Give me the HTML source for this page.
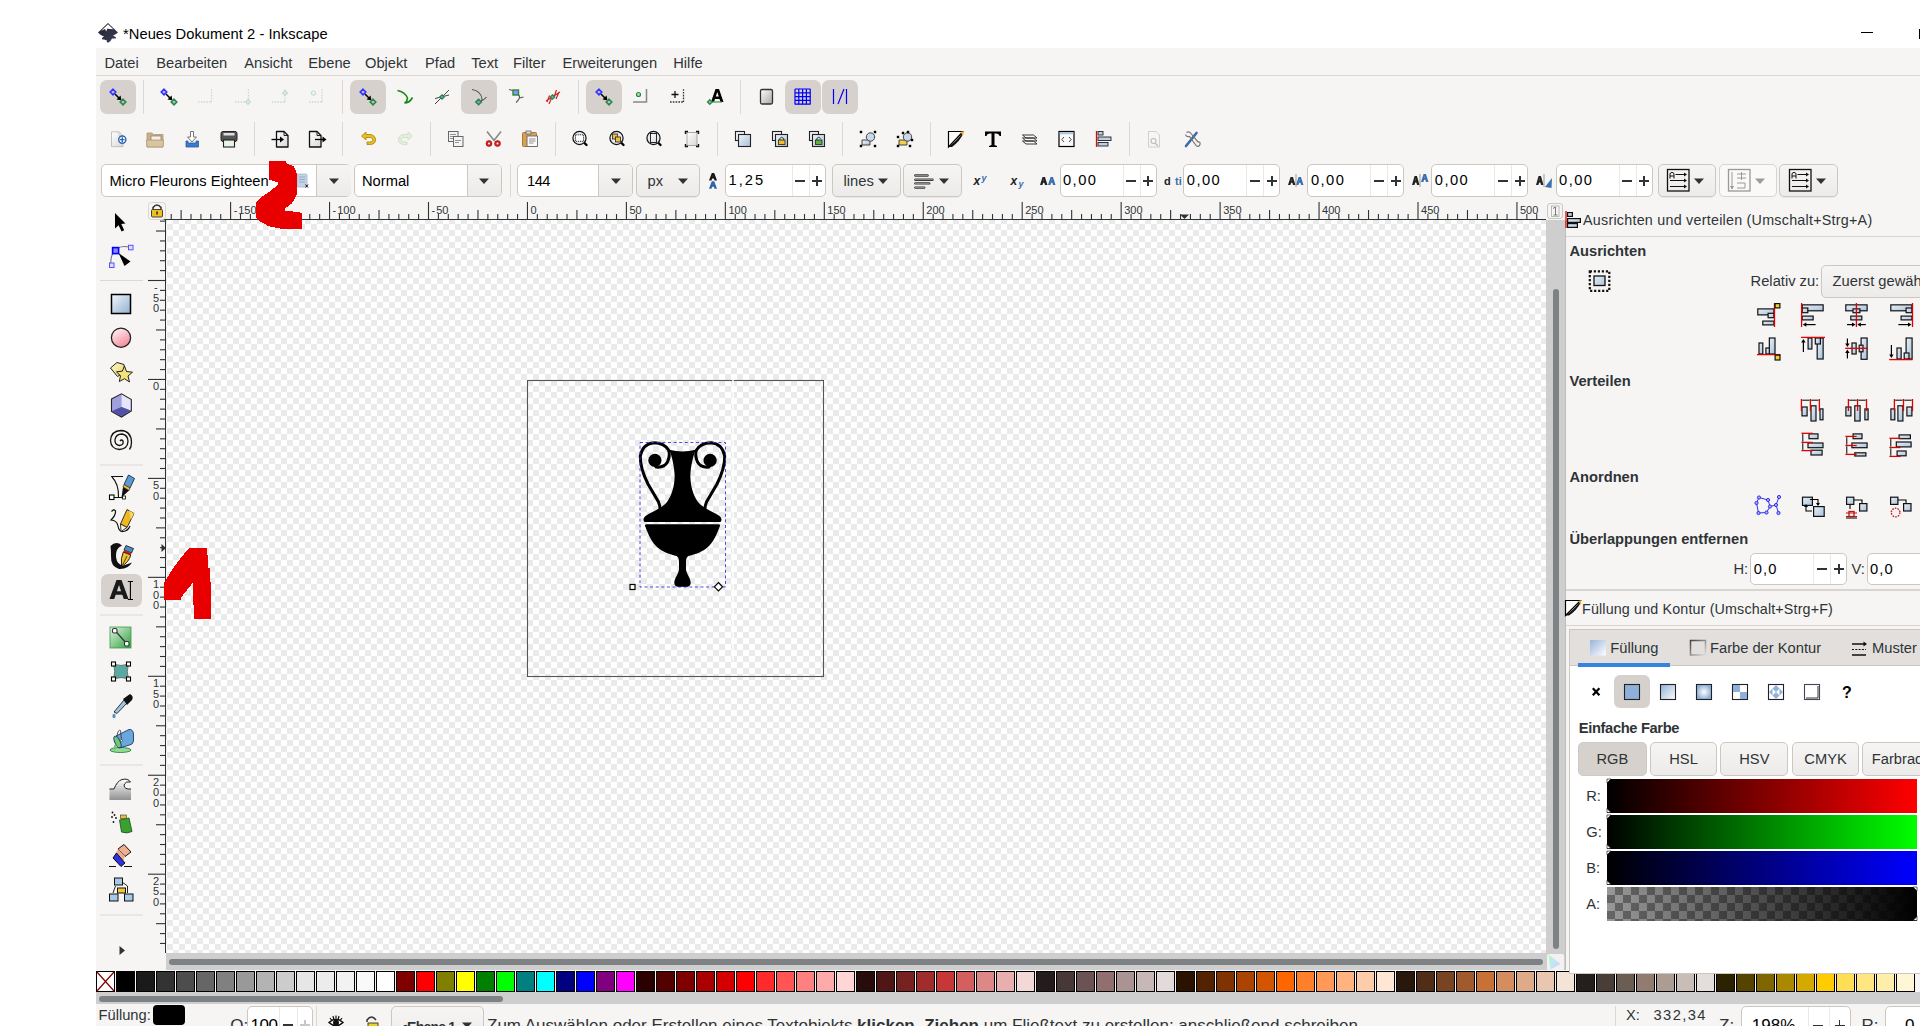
<!DOCTYPE html>
<html><head><meta charset="utf-8"><title>Inkscape</title>
<style>
html,body{margin:0;padding:0;}
body{width:1920px;height:1026px;position:relative;overflow:hidden;background:#fff;font-family:"Liberation Sans", sans-serif;}
div,svg{box-sizing:border-box;}
</style></head><body>
<div style="position:absolute;left:96px;top:48px;width:1824px;height:978px;background:#f6f5f4;"></div><div style="position:absolute;left:96px;top:75px;width:1824px;height:1px;background:#dcd9d5;"></div><div class="t" style="position:absolute;left:123px;top:26.76px;font-size:14.7px;line-height:14.7px;color:#000;font-weight:normal;white-space:nowrap;letter-spacing:0.05px;">*Neues Dokument 2 - Inkscape</div><svg style="position:absolute;left:94px;top:18px;" width="30" height="28" viewBox="0 0 30 28"><defs><linearGradient id="gInk" x1="0" y1="0" x2="1" y2="1"><stop offset="0" stop-color="#222"/><stop offset="1" stop-color="#3a4060"/></linearGradient></defs><path d="M14 5 L24 14.5 Q22 16.5 19 17.5 L21.5 19 Q23 20.5 20.5 20.5 L18 20.5 Q17 23 14.5 24.5 Q12 24.5 13 22.5 L10 21.5 Q7.5 21.5 8 20 L10 18.5 Q6 17 4 14.5 Z" fill="url(#gInk)"/><path d="M14 6.2 L7.2 12.8 L11 11 L12.2 13.5 L13.2 10.8 L19.3 11.3 Z" fill="#fff"/></svg><div style="position:absolute;left:1861px;top:32px;width:12px;height:1px;background:#000;"></div><div style="position:absolute;left:1919px;top:29px;width:1px;height:10px;background:#000;"></div><div class="t" style="position:absolute;left:104.5px;top:55.56px;font-size:14.7px;line-height:14.7px;color:#2e3436;font-weight:normal;white-space:nowrap;">Datei</div><div class="t" style="position:absolute;left:156.25px;top:55.56px;font-size:14.7px;line-height:14.7px;color:#2e3436;font-weight:normal;white-space:nowrap;">Bearbeiten</div><div class="t" style="position:absolute;left:244.25px;top:55.56px;font-size:14.7px;line-height:14.7px;color:#2e3436;font-weight:normal;white-space:nowrap;">Ansicht</div><div class="t" style="position:absolute;left:308.25px;top:55.56px;font-size:14.7px;line-height:14.7px;color:#2e3436;font-weight:normal;white-space:nowrap;">Ebene</div><div class="t" style="position:absolute;left:365px;top:55.56px;font-size:14.7px;line-height:14.7px;color:#2e3436;font-weight:normal;white-space:nowrap;">Objekt</div><div class="t" style="position:absolute;left:425px;top:55.56px;font-size:14.7px;line-height:14.7px;color:#2e3436;font-weight:normal;white-space:nowrap;">Pfad</div><div class="t" style="position:absolute;left:471.25px;top:55.56px;font-size:14.7px;line-height:14.7px;color:#2e3436;font-weight:normal;white-space:nowrap;">Text</div><div class="t" style="position:absolute;left:513px;top:55.56px;font-size:14.7px;line-height:14.7px;color:#2e3436;font-weight:normal;white-space:nowrap;">Filter</div><div class="t" style="position:absolute;left:562.5px;top:55.56px;font-size:14.7px;line-height:14.7px;color:#2e3436;font-weight:normal;white-space:nowrap;">Erweiterungen</div><div class="t" style="position:absolute;left:673.25px;top:55.56px;font-size:14.7px;line-height:14.7px;color:#2e3436;font-weight:normal;white-space:nowrap;">Hilfe</div><div style="position:absolute;left:166px;top:220px;width:1380px;height:733px;background-color:#fff;background-image:conic-gradient(#fff 25%, #eaeaea 0 50%, #fff 0 75%, #eaeaea 0);background-size:12px 12px;background-position:1px 4px;"></div><div style="position:absolute;left:100px;top:80px;width:36px;height:34px;background:#d6d1cd;border-radius:7px;"></div><div style="position:absolute;left:143px;top:80px;width:1px;height:34px;background:#dcd9d5;"></div><div style="position:absolute;left:342px;top:80px;width:1px;height:34px;background:#dcd9d5;"></div><div style="position:absolute;left:350px;top:80px;width:36px;height:34px;background:#d6d1cd;border-radius:7px;"></div><div style="position:absolute;left:461px;top:80px;width:36px;height:34px;background:#d6d1cd;border-radius:7px;"></div><div style="position:absolute;left:578px;top:80px;width:1px;height:34px;background:#dcd9d5;"></div><div style="position:absolute;left:586px;top:80px;width:36px;height:34px;background:#d6d1cd;border-radius:7px;"></div><div style="position:absolute;left:740px;top:80px;width:1px;height:34px;background:#dcd9d5;"></div><div style="position:absolute;left:785px;top:80px;width:36px;height:34px;background:#d6d1cd;border-radius:7px;"></div><div style="position:absolute;left:822px;top:80px;width:36px;height:34px;background:#d6d1cd;border-radius:7px;"></div><div style="position:absolute;left:254px;top:122px;width:1px;height:34px;background:#dcd9d5;"></div><div style="position:absolute;left:430px;top:122px;width:1px;height:34px;background:#dcd9d5;"></div><div style="position:absolute;left:555px;top:122px;width:1px;height:34px;background:#dcd9d5;"></div><div style="position:absolute;left:717px;top:122px;width:1px;height:34px;background:#dcd9d5;"></div><div style="position:absolute;left:842px;top:122px;width:1px;height:34px;background:#dcd9d5;"></div><div style="position:absolute;left:930px;top:122px;width:1px;height:34px;background:#dcd9d5;"></div><div style="position:absolute;left:1129px;top:122px;width:1px;height:34px;background:#dcd9d5;"></div><div style="position:absolute;left:101px;top:164px;width:250px;height:33px;background:#fff;border:1px solid #cdc7c2;border-radius:5px;"></div><div style="position:absolute;left:316px;top:165px;width:35px;height:31px;background:linear-gradient(#f6f5f4,#edebe9);border-left:1px solid #cdc7c2;border-radius:0 4px 4px 0;"></div><svg style="position:absolute;left:329px;top:178px;" width="10" height="6" viewBox="0 0 10 6"><path d="M0 0.5H10L5 6Z" fill="#2e3436"/></svg><div class="t" style="position:absolute;left:109.5px;top:174.06px;font-size:14.7px;line-height:14.7px;color:#000;font-weight:normal;white-space:nowrap;">Micro Fleurons Eighteen</div><svg style="position:absolute;left:290px;top:170px;" width="24" height="24" viewBox="0 0 24 24"><rect x="7" y="4" width="10" height="13" rx="1" fill="#c4d4e8" stroke="#a8b8cc" stroke-width="0.8"/><path d="M9 7 L15 7 M9 9.5 L15 9.5 M9 12 L15 12" stroke="#8aa0c0" stroke-width="0.8"/><path d="M15.5 14.5 L18 17.5 M18 14.5 L15.5 17.5" stroke="#111" stroke-width="1"/></svg><div style="position:absolute;left:353.5px;top:164px;width:148px;height:33px;background:#fff;border:1px solid #cdc7c2;border-radius:5px;"></div><div style="position:absolute;left:466.5px;top:165px;width:34px;height:31px;background:linear-gradient(#f6f5f4,#edebe9);border-left:1px solid #cdc7c2;border-radius:0 4px 4px 0;"></div><svg style="position:absolute;left:479px;top:178px;" width="10" height="6" viewBox="0 0 10 6"><path d="M0 0.5H10L5 6Z" fill="#2e3436"/></svg><div class="t" style="position:absolute;left:362px;top:174.06px;font-size:14.7px;line-height:14.7px;color:#000;font-weight:normal;white-space:nowrap;">Normal</div><div style="position:absolute;left:510px;top:164px;width:1px;height:33px;background:#dcd9d5;"></div><div style="position:absolute;left:517px;top:164px;width:116px;height:33px;background:#fff;border:1px solid #cdc7c2;border-radius:5px;"></div><div style="position:absolute;left:598px;top:165px;width:34px;height:31px;background:linear-gradient(#f6f5f4,#edebe9);border-left:1px solid #cdc7c2;border-radius:0 4px 4px 0;"></div><svg style="position:absolute;left:611px;top:178px;" width="10" height="6" viewBox="0 0 10 6"><path d="M0 0.5H10L5 6Z" fill="#2e3436"/></svg><div class="t" style="position:absolute;left:527px;top:173.56px;font-size:14.7px;line-height:14.7px;color:#000;font-weight:normal;white-space:nowrap;letter-spacing:-0.5px;">144</div><div style="position:absolute;left:636px;top:164px;width:64px;height:33px;background:linear-gradient(#f6f5f4,#edebe9);border:1px solid #cdc7c2;border-radius:5px;box-shadow:0 1px #0000000d;"></div><div class="t" style="position:absolute;left:647.5px;top:174.06px;font-size:14.7px;line-height:14.7px;color:#2e3436;font-weight:normal;white-space:nowrap;">px</div><svg style="position:absolute;left:678px;top:178px;" width="10" height="6" viewBox="0 0 10 6"><path d="M0 0.5H10L5 6Z" fill="#2e3436"/></svg><div style="position:absolute;left:725px;top:164px;width:101px;height:33px;background:#fff;border:1px solid #cdc7c2;border-radius:5px;"></div><div style="position:absolute;left:792px;top:165px;width:1px;height:31px;background:#ebe8e6;"></div><div style="position:absolute;left:809px;top:165px;width:1px;height:31px;background:#ebe8e6;"></div><div style="position:absolute;left:795px;top:180px;width:10px;height:2px;background:#2e3436;"></div><div style="position:absolute;left:812px;top:180px;width:10px;height:2px;background:#2e3436;"></div><div style="position:absolute;left:816px;top:176px;width:2px;height:10px;background:#2e3436;"></div><div class="t" style="position:absolute;left:728.5px;top:173.06px;font-size:14.7px;line-height:14.7px;color:#000;font-weight:normal;white-space:nowrap;letter-spacing:2px;">1,25</div><div style="position:absolute;left:831.5px;top:164px;width:69px;height:33px;background:linear-gradient(#f6f5f4,#edebe9);border:1px solid #cdc7c2;border-radius:5px;box-shadow:0 1px #0000000d;"></div><div class="t" style="position:absolute;left:843.6px;top:174.06px;font-size:14.7px;line-height:14.7px;color:#2e3436;font-weight:normal;white-space:nowrap;">lines</div><svg style="position:absolute;left:878px;top:178px;" width="10" height="6" viewBox="0 0 10 6"><path d="M0 0.5H10L5 6Z" fill="#2e3436"/></svg><div style="position:absolute;left:902.5px;top:164px;width:59px;height:33px;background:linear-gradient(#f6f5f4,#edebe9);border:1px solid #cdc7c2;border-radius:5px;box-shadow:0 1px #0000000d;"></div><svg style="position:absolute;left:939px;top:178px;" width="10" height="6" viewBox="0 0 10 6"><path d="M0 0.5H10L5 6Z" fill="#2e3436"/></svg><div style="position:absolute;left:1059.5px;top:164px;width:97px;height:33px;background:#fff;border:1px solid #cdc7c2;border-radius:5px;"></div><div style="position:absolute;left:1122.5px;top:165px;width:1px;height:31px;background:#ebe8e6;"></div><div style="position:absolute;left:1139.5px;top:165px;width:1px;height:31px;background:#ebe8e6;"></div><div style="position:absolute;left:1126px;top:180px;width:10px;height:2px;background:#2e3436;"></div><div style="position:absolute;left:1143px;top:180px;width:10px;height:2px;background:#2e3436;"></div><div style="position:absolute;left:1147px;top:176px;width:2px;height:10px;background:#2e3436;"></div><div class="t" style="position:absolute;left:1063.0px;top:173.06px;font-size:14.7px;line-height:14.7px;color:#000;font-weight:normal;white-space:nowrap;letter-spacing:1.45px;">0,00</div><div style="position:absolute;left:1183.3px;top:164px;width:97px;height:33px;background:#fff;border:1px solid #cdc7c2;border-radius:5px;"></div><div style="position:absolute;left:1246.3px;top:165px;width:1px;height:31px;background:#ebe8e6;"></div><div style="position:absolute;left:1263.3px;top:165px;width:1px;height:31px;background:#ebe8e6;"></div><div style="position:absolute;left:1250px;top:180px;width:10px;height:2px;background:#2e3436;"></div><div style="position:absolute;left:1267px;top:180px;width:10px;height:2px;background:#2e3436;"></div><div style="position:absolute;left:1271px;top:176px;width:2px;height:10px;background:#2e3436;"></div><div class="t" style="position:absolute;left:1186.8px;top:173.06px;font-size:14.7px;line-height:14.7px;color:#000;font-weight:normal;white-space:nowrap;letter-spacing:1.45px;">0,00</div><div style="position:absolute;left:1307.4px;top:164px;width:97px;height:33px;background:#fff;border:1px solid #cdc7c2;border-radius:5px;"></div><div style="position:absolute;left:1370.4px;top:165px;width:1px;height:31px;background:#ebe8e6;"></div><div style="position:absolute;left:1387.4px;top:165px;width:1px;height:31px;background:#ebe8e6;"></div><div style="position:absolute;left:1374px;top:180px;width:10px;height:2px;background:#2e3436;"></div><div style="position:absolute;left:1391px;top:180px;width:10px;height:2px;background:#2e3436;"></div><div style="position:absolute;left:1395px;top:176px;width:2px;height:10px;background:#2e3436;"></div><div class="t" style="position:absolute;left:1310.9px;top:173.06px;font-size:14.7px;line-height:14.7px;color:#000;font-weight:normal;white-space:nowrap;letter-spacing:1.45px;">0,00</div><div style="position:absolute;left:1431.3px;top:164px;width:97px;height:33px;background:#fff;border:1px solid #cdc7c2;border-radius:5px;"></div><div style="position:absolute;left:1494.3px;top:165px;width:1px;height:31px;background:#ebe8e6;"></div><div style="position:absolute;left:1511.3px;top:165px;width:1px;height:31px;background:#ebe8e6;"></div><div style="position:absolute;left:1498px;top:180px;width:10px;height:2px;background:#2e3436;"></div><div style="position:absolute;left:1515px;top:180px;width:10px;height:2px;background:#2e3436;"></div><div style="position:absolute;left:1519px;top:176px;width:2px;height:10px;background:#2e3436;"></div><div class="t" style="position:absolute;left:1434.8px;top:173.06px;font-size:14.7px;line-height:14.7px;color:#000;font-weight:normal;white-space:nowrap;letter-spacing:1.45px;">0,00</div><div style="position:absolute;left:1555.6px;top:164px;width:97px;height:33px;background:#fff;border:1px solid #cdc7c2;border-radius:5px;"></div><div style="position:absolute;left:1618.6px;top:165px;width:1px;height:31px;background:#ebe8e6;"></div><div style="position:absolute;left:1635.6px;top:165px;width:1px;height:31px;background:#ebe8e6;"></div><div style="position:absolute;left:1622px;top:180px;width:10px;height:2px;background:#2e3436;"></div><div style="position:absolute;left:1639px;top:180px;width:10px;height:2px;background:#2e3436;"></div><div style="position:absolute;left:1643px;top:176px;width:2px;height:10px;background:#2e3436;"></div><div class="t" style="position:absolute;left:1559.1px;top:173.06px;font-size:14.7px;line-height:14.7px;color:#000;font-weight:normal;white-space:nowrap;letter-spacing:1.45px;">0,00</div><div style="position:absolute;left:1657.5px;top:164px;width:58.5px;height:33px;background:linear-gradient(#f6f5f4,#edebe9);border:1px solid #cdc7c2;border-radius:5px;box-shadow:0 1px #0000000d;"></div><svg style="position:absolute;left:1694px;top:178px;" width="10" height="6" viewBox="0 0 10 6"><path d="M0 0.5H10L5 6Z" fill="#2e3436"/></svg><div style="position:absolute;left:1718.7px;top:164px;width:58.5px;height:33px;background:#faf9f8;border:1px solid #d8d4d0;border-radius:5px;"></div><svg style="position:absolute;left:1755px;top:178px;" width="10" height="6" viewBox="0 0 10 6"><path d="M0 0.5H10L5 6Z" fill="#9a9a9a"/></svg><div style="position:absolute;left:1779.2px;top:164px;width:59.3px;height:33px;background:linear-gradient(#f6f5f4,#edebe9);border:1px solid #cdc7c2;border-radius:5px;box-shadow:0 1px #0000000d;"></div><svg style="position:absolute;left:1816px;top:178px;" width="10" height="6" viewBox="0 0 10 6"><path d="M0 0.5H10L5 6Z" fill="#2e3436"/></svg><div style="position:absolute;left:160px;top:219px;width:1386px;height:1.2px;background:#2e3436;"></div><div style="position:absolute;left:165px;top:219px;width:1.2px;height:734px;background:#2e3436;"></div><svg style="position:absolute;left:0px;top:0px;pointer-events:none;" width="1920" height="1026" viewBox="0 0 1920 1026"><rect x="170.68" y="214" width="1.1" height="6" fill="#2e3436"/><rect x="180.58" y="210" width="1.1" height="10" fill="#2e3436"/><rect x="190.47" y="214" width="1.1" height="6" fill="#2e3436"/><rect x="200.36" y="214" width="1.1" height="6" fill="#2e3436"/><rect x="210.26" y="214" width="1.1" height="6" fill="#2e3436"/><rect x="220.16" y="214" width="1.1" height="6" fill="#2e3436"/><rect x="230.05" y="202" width="1.1" height="18" fill="#2e3436"/><rect x="239.94" y="214" width="1.1" height="6" fill="#2e3436"/><rect x="249.84" y="214" width="1.1" height="6" fill="#2e3436"/><rect x="259.73" y="214" width="1.1" height="6" fill="#2e3436"/><rect x="269.63" y="214" width="1.1" height="6" fill="#2e3436"/><rect x="279.52" y="210" width="1.1" height="10" fill="#2e3436"/><rect x="289.42" y="214" width="1.1" height="6" fill="#2e3436"/><rect x="299.31" y="214" width="1.1" height="6" fill="#2e3436"/><rect x="309.21" y="214" width="1.1" height="6" fill="#2e3436"/><rect x="319.10" y="214" width="1.1" height="6" fill="#2e3436"/><rect x="329.00" y="202" width="1.1" height="18" fill="#2e3436"/><rect x="338.89" y="214" width="1.1" height="6" fill="#2e3436"/><rect x="348.79" y="214" width="1.1" height="6" fill="#2e3436"/><rect x="358.68" y="214" width="1.1" height="6" fill="#2e3436"/><rect x="368.58" y="214" width="1.1" height="6" fill="#2e3436"/><rect x="378.47" y="210" width="1.1" height="10" fill="#2e3436"/><rect x="388.37" y="214" width="1.1" height="6" fill="#2e3436"/><rect x="398.26" y="214" width="1.1" height="6" fill="#2e3436"/><rect x="408.16" y="214" width="1.1" height="6" fill="#2e3436"/><rect x="418.05" y="214" width="1.1" height="6" fill="#2e3436"/><rect x="427.95" y="202" width="1.1" height="18" fill="#2e3436"/><rect x="437.84" y="214" width="1.1" height="6" fill="#2e3436"/><rect x="447.74" y="214" width="1.1" height="6" fill="#2e3436"/><rect x="457.63" y="214" width="1.1" height="6" fill="#2e3436"/><rect x="467.53" y="214" width="1.1" height="6" fill="#2e3436"/><rect x="477.42" y="210" width="1.1" height="10" fill="#2e3436"/><rect x="487.32" y="214" width="1.1" height="6" fill="#2e3436"/><rect x="497.21" y="214" width="1.1" height="6" fill="#2e3436"/><rect x="507.11" y="214" width="1.1" height="6" fill="#2e3436"/><rect x="517.00" y="214" width="1.1" height="6" fill="#2e3436"/><rect x="526.90" y="202" width="1.1" height="18" fill="#2e3436"/><rect x="536.79" y="214" width="1.1" height="6" fill="#2e3436"/><rect x="546.69" y="214" width="1.1" height="6" fill="#2e3436"/><rect x="556.58" y="214" width="1.1" height="6" fill="#2e3436"/><rect x="566.48" y="214" width="1.1" height="6" fill="#2e3436"/><rect x="576.38" y="210" width="1.1" height="10" fill="#2e3436"/><rect x="586.27" y="214" width="1.1" height="6" fill="#2e3436"/><rect x="596.16" y="214" width="1.1" height="6" fill="#2e3436"/><rect x="606.06" y="214" width="1.1" height="6" fill="#2e3436"/><rect x="615.96" y="214" width="1.1" height="6" fill="#2e3436"/><rect x="625.85" y="202" width="1.1" height="18" fill="#2e3436"/><rect x="635.75" y="214" width="1.1" height="6" fill="#2e3436"/><rect x="645.64" y="214" width="1.1" height="6" fill="#2e3436"/><rect x="655.53" y="214" width="1.1" height="6" fill="#2e3436"/><rect x="665.43" y="214" width="1.1" height="6" fill="#2e3436"/><rect x="675.32" y="210" width="1.1" height="10" fill="#2e3436"/><rect x="685.22" y="214" width="1.1" height="6" fill="#2e3436"/><rect x="695.12" y="214" width="1.1" height="6" fill="#2e3436"/><rect x="705.01" y="214" width="1.1" height="6" fill="#2e3436"/><rect x="714.90" y="214" width="1.1" height="6" fill="#2e3436"/><rect x="724.80" y="202" width="1.1" height="18" fill="#2e3436"/><rect x="734.70" y="214" width="1.1" height="6" fill="#2e3436"/><rect x="744.59" y="214" width="1.1" height="6" fill="#2e3436"/><rect x="754.49" y="214" width="1.1" height="6" fill="#2e3436"/><rect x="764.38" y="214" width="1.1" height="6" fill="#2e3436"/><rect x="774.27" y="210" width="1.1" height="10" fill="#2e3436"/><rect x="784.17" y="214" width="1.1" height="6" fill="#2e3436"/><rect x="794.06" y="214" width="1.1" height="6" fill="#2e3436"/><rect x="803.96" y="214" width="1.1" height="6" fill="#2e3436"/><rect x="813.86" y="214" width="1.1" height="6" fill="#2e3436"/><rect x="823.75" y="202" width="1.1" height="18" fill="#2e3436"/><rect x="833.64" y="214" width="1.1" height="6" fill="#2e3436"/><rect x="843.54" y="214" width="1.1" height="6" fill="#2e3436"/><rect x="853.44" y="214" width="1.1" height="6" fill="#2e3436"/><rect x="863.33" y="214" width="1.1" height="6" fill="#2e3436"/><rect x="873.23" y="210" width="1.1" height="10" fill="#2e3436"/><rect x="883.12" y="214" width="1.1" height="6" fill="#2e3436"/><rect x="893.01" y="214" width="1.1" height="6" fill="#2e3436"/><rect x="902.91" y="214" width="1.1" height="6" fill="#2e3436"/><rect x="912.80" y="214" width="1.1" height="6" fill="#2e3436"/><rect x="922.70" y="202" width="1.1" height="18" fill="#2e3436"/><rect x="932.59" y="214" width="1.1" height="6" fill="#2e3436"/><rect x="942.49" y="214" width="1.1" height="6" fill="#2e3436"/><rect x="952.38" y="214" width="1.1" height="6" fill="#2e3436"/><rect x="962.28" y="214" width="1.1" height="6" fill="#2e3436"/><rect x="972.18" y="210" width="1.1" height="10" fill="#2e3436"/><rect x="982.07" y="214" width="1.1" height="6" fill="#2e3436"/><rect x="991.97" y="214" width="1.1" height="6" fill="#2e3436"/><rect x="1001.86" y="214" width="1.1" height="6" fill="#2e3436"/><rect x="1011.75" y="214" width="1.1" height="6" fill="#2e3436"/><rect x="1021.65" y="202" width="1.1" height="18" fill="#2e3436"/><rect x="1031.55" y="214" width="1.1" height="6" fill="#2e3436"/><rect x="1041.44" y="214" width="1.1" height="6" fill="#2e3436"/><rect x="1051.34" y="214" width="1.1" height="6" fill="#2e3436"/><rect x="1061.23" y="214" width="1.1" height="6" fill="#2e3436"/><rect x="1071.12" y="210" width="1.1" height="10" fill="#2e3436"/><rect x="1081.02" y="214" width="1.1" height="6" fill="#2e3436"/><rect x="1090.91" y="214" width="1.1" height="6" fill="#2e3436"/><rect x="1100.81" y="214" width="1.1" height="6" fill="#2e3436"/><rect x="1110.71" y="214" width="1.1" height="6" fill="#2e3436"/><rect x="1120.60" y="202" width="1.1" height="18" fill="#2e3436"/><rect x="1130.50" y="214" width="1.1" height="6" fill="#2e3436"/><rect x="1140.39" y="214" width="1.1" height="6" fill="#2e3436"/><rect x="1150.29" y="214" width="1.1" height="6" fill="#2e3436"/><rect x="1160.18" y="214" width="1.1" height="6" fill="#2e3436"/><rect x="1170.08" y="210" width="1.1" height="10" fill="#2e3436"/><rect x="1179.97" y="214" width="1.1" height="6" fill="#2e3436"/><rect x="1189.87" y="214" width="1.1" height="6" fill="#2e3436"/><rect x="1199.76" y="214" width="1.1" height="6" fill="#2e3436"/><rect x="1209.66" y="214" width="1.1" height="6" fill="#2e3436"/><rect x="1219.55" y="202" width="1.1" height="18" fill="#2e3436"/><rect x="1229.45" y="214" width="1.1" height="6" fill="#2e3436"/><rect x="1239.34" y="214" width="1.1" height="6" fill="#2e3436"/><rect x="1249.24" y="214" width="1.1" height="6" fill="#2e3436"/><rect x="1259.13" y="214" width="1.1" height="6" fill="#2e3436"/><rect x="1269.03" y="210" width="1.1" height="10" fill="#2e3436"/><rect x="1278.92" y="214" width="1.1" height="6" fill="#2e3436"/><rect x="1288.82" y="214" width="1.1" height="6" fill="#2e3436"/><rect x="1298.71" y="214" width="1.1" height="6" fill="#2e3436"/><rect x="1308.61" y="214" width="1.1" height="6" fill="#2e3436"/><rect x="1318.50" y="202" width="1.1" height="18" fill="#2e3436"/><rect x="1328.39" y="214" width="1.1" height="6" fill="#2e3436"/><rect x="1338.29" y="214" width="1.1" height="6" fill="#2e3436"/><rect x="1348.19" y="214" width="1.1" height="6" fill="#2e3436"/><rect x="1358.08" y="214" width="1.1" height="6" fill="#2e3436"/><rect x="1367.98" y="210" width="1.1" height="10" fill="#2e3436"/><rect x="1377.87" y="214" width="1.1" height="6" fill="#2e3436"/><rect x="1387.77" y="214" width="1.1" height="6" fill="#2e3436"/><rect x="1397.66" y="214" width="1.1" height="6" fill="#2e3436"/><rect x="1407.56" y="214" width="1.1" height="6" fill="#2e3436"/><rect x="1417.45" y="202" width="1.1" height="18" fill="#2e3436"/><rect x="1427.35" y="214" width="1.1" height="6" fill="#2e3436"/><rect x="1437.24" y="214" width="1.1" height="6" fill="#2e3436"/><rect x="1447.14" y="214" width="1.1" height="6" fill="#2e3436"/><rect x="1457.03" y="214" width="1.1" height="6" fill="#2e3436"/><rect x="1466.93" y="210" width="1.1" height="10" fill="#2e3436"/><rect x="1476.82" y="214" width="1.1" height="6" fill="#2e3436"/><rect x="1486.72" y="214" width="1.1" height="6" fill="#2e3436"/><rect x="1496.61" y="214" width="1.1" height="6" fill="#2e3436"/><rect x="1506.51" y="214" width="1.1" height="6" fill="#2e3436"/><rect x="1516.40" y="202" width="1.1" height="18" fill="#2e3436"/><rect x="1526.30" y="214" width="1.1" height="6" fill="#2e3436"/><rect x="1536.19" y="214" width="1.1" height="6" fill="#2e3436"/></svg><div class="t" style="position:absolute;left:233.64999999999998px;top:204.69px;font-size:11px;line-height:11px;color:#2e3436;font-weight:normal;white-space:nowrap;">-&#8202;150</div><div class="t" style="position:absolute;left:332.6px;top:204.69px;font-size:11px;line-height:11px;color:#2e3436;font-weight:normal;white-space:nowrap;">-&#8202;100</div><div class="t" style="position:absolute;left:431.55px;top:204.69px;font-size:11px;line-height:11px;color:#2e3436;font-weight:normal;white-space:nowrap;">-&#8202;50</div><div class="t" style="position:absolute;left:530.5px;top:204.69px;font-size:11px;line-height:11px;color:#2e3436;font-weight:normal;white-space:nowrap;">0</div><div class="t" style="position:absolute;left:629.45px;top:204.69px;font-size:11px;line-height:11px;color:#2e3436;font-weight:normal;white-space:nowrap;">50</div><div class="t" style="position:absolute;left:728.4px;top:204.69px;font-size:11px;line-height:11px;color:#2e3436;font-weight:normal;white-space:nowrap;">100</div><div class="t" style="position:absolute;left:827.35px;top:204.69px;font-size:11px;line-height:11px;color:#2e3436;font-weight:normal;white-space:nowrap;">150</div><div class="t" style="position:absolute;left:926.3px;top:204.69px;font-size:11px;line-height:11px;color:#2e3436;font-weight:normal;white-space:nowrap;">200</div><div class="t" style="position:absolute;left:1025.25px;top:204.69px;font-size:11px;line-height:11px;color:#2e3436;font-weight:normal;white-space:nowrap;">250</div><div class="t" style="position:absolute;left:1124.2px;top:204.69px;font-size:11px;line-height:11px;color:#2e3436;font-weight:normal;white-space:nowrap;">300</div><div class="t" style="position:absolute;left:1223.15px;top:204.69px;font-size:11px;line-height:11px;color:#2e3436;font-weight:normal;white-space:nowrap;">350</div><div class="t" style="position:absolute;left:1322.1px;top:204.69px;font-size:11px;line-height:11px;color:#2e3436;font-weight:normal;white-space:nowrap;">400</div><div class="t" style="position:absolute;left:1421.0500000000002px;top:204.69px;font-size:11px;line-height:11px;color:#2e3436;font-weight:normal;white-space:nowrap;">450</div><div class="t" style="position:absolute;left:1520.0px;top:204.69px;font-size:11px;line-height:11px;color:#2e3436;font-weight:normal;white-space:nowrap;">500</div><svg style="position:absolute;left:0px;top:0px;pointer-events:none;" width="1920" height="1026" viewBox="0 0 1920 1026"><rect x="160" y="220.58" width="6" height="1.1" fill="#2e3436"/><rect x="156" y="230.47" width="10" height="1.1" fill="#2e3436"/><rect x="160" y="240.37" width="6" height="1.1" fill="#2e3436"/><rect x="160" y="250.26" width="6" height="1.1" fill="#2e3436"/><rect x="160" y="260.16" width="6" height="1.1" fill="#2e3436"/><rect x="160" y="270.05" width="6" height="1.1" fill="#2e3436"/><rect x="148" y="279.95" width="18" height="1.1" fill="#2e3436"/><rect x="160" y="289.84" width="6" height="1.1" fill="#2e3436"/><rect x="160" y="299.74" width="6" height="1.1" fill="#2e3436"/><rect x="160" y="309.63" width="6" height="1.1" fill="#2e3436"/><rect x="160" y="319.53" width="6" height="1.1" fill="#2e3436"/><rect x="156" y="329.42" width="10" height="1.1" fill="#2e3436"/><rect x="160" y="339.32" width="6" height="1.1" fill="#2e3436"/><rect x="160" y="349.21" width="6" height="1.1" fill="#2e3436"/><rect x="160" y="359.11" width="6" height="1.1" fill="#2e3436"/><rect x="160" y="369.00" width="6" height="1.1" fill="#2e3436"/><rect x="148" y="378.90" width="18" height="1.1" fill="#2e3436"/><rect x="160" y="388.79" width="6" height="1.1" fill="#2e3436"/><rect x="160" y="398.69" width="6" height="1.1" fill="#2e3436"/><rect x="160" y="408.58" width="6" height="1.1" fill="#2e3436"/><rect x="160" y="418.48" width="6" height="1.1" fill="#2e3436"/><rect x="156" y="428.38" width="10" height="1.1" fill="#2e3436"/><rect x="160" y="438.27" width="6" height="1.1" fill="#2e3436"/><rect x="160" y="448.16" width="6" height="1.1" fill="#2e3436"/><rect x="160" y="458.06" width="6" height="1.1" fill="#2e3436"/><rect x="160" y="467.95" width="6" height="1.1" fill="#2e3436"/><rect x="148" y="477.85" width="18" height="1.1" fill="#2e3436"/><rect x="160" y="487.75" width="6" height="1.1" fill="#2e3436"/><rect x="160" y="497.64" width="6" height="1.1" fill="#2e3436"/><rect x="160" y="507.53" width="6" height="1.1" fill="#2e3436"/><rect x="160" y="517.43" width="6" height="1.1" fill="#2e3436"/><rect x="156" y="527.32" width="10" height="1.1" fill="#2e3436"/><rect x="160" y="537.22" width="6" height="1.1" fill="#2e3436"/><rect x="160" y="547.12" width="6" height="1.1" fill="#2e3436"/><rect x="160" y="557.01" width="6" height="1.1" fill="#2e3436"/><rect x="160" y="566.90" width="6" height="1.1" fill="#2e3436"/><rect x="148" y="576.80" width="18" height="1.1" fill="#2e3436"/><rect x="160" y="586.70" width="6" height="1.1" fill="#2e3436"/><rect x="160" y="596.59" width="6" height="1.1" fill="#2e3436"/><rect x="160" y="606.49" width="6" height="1.1" fill="#2e3436"/><rect x="160" y="616.38" width="6" height="1.1" fill="#2e3436"/><rect x="156" y="626.27" width="10" height="1.1" fill="#2e3436"/><rect x="160" y="636.17" width="6" height="1.1" fill="#2e3436"/><rect x="160" y="646.06" width="6" height="1.1" fill="#2e3436"/><rect x="160" y="655.96" width="6" height="1.1" fill="#2e3436"/><rect x="160" y="665.86" width="6" height="1.1" fill="#2e3436"/><rect x="148" y="675.75" width="18" height="1.1" fill="#2e3436"/><rect x="160" y="685.64" width="6" height="1.1" fill="#2e3436"/><rect x="160" y="695.54" width="6" height="1.1" fill="#2e3436"/><rect x="160" y="705.44" width="6" height="1.1" fill="#2e3436"/><rect x="160" y="715.33" width="6" height="1.1" fill="#2e3436"/><rect x="156" y="725.23" width="10" height="1.1" fill="#2e3436"/><rect x="160" y="735.12" width="6" height="1.1" fill="#2e3436"/><rect x="160" y="745.01" width="6" height="1.1" fill="#2e3436"/><rect x="160" y="754.91" width="6" height="1.1" fill="#2e3436"/><rect x="160" y="764.80" width="6" height="1.1" fill="#2e3436"/><rect x="148" y="774.70" width="18" height="1.1" fill="#2e3436"/><rect x="160" y="784.59" width="6" height="1.1" fill="#2e3436"/><rect x="160" y="794.49" width="6" height="1.1" fill="#2e3436"/><rect x="160" y="804.38" width="6" height="1.1" fill="#2e3436"/><rect x="160" y="814.28" width="6" height="1.1" fill="#2e3436"/><rect x="156" y="824.18" width="10" height="1.1" fill="#2e3436"/><rect x="160" y="834.07" width="6" height="1.1" fill="#2e3436"/><rect x="160" y="843.97" width="6" height="1.1" fill="#2e3436"/><rect x="160" y="853.86" width="6" height="1.1" fill="#2e3436"/><rect x="160" y="863.75" width="6" height="1.1" fill="#2e3436"/><rect x="148" y="873.65" width="18" height="1.1" fill="#2e3436"/><rect x="160" y="883.54" width="6" height="1.1" fill="#2e3436"/><rect x="160" y="893.44" width="6" height="1.1" fill="#2e3436"/><rect x="160" y="903.34" width="6" height="1.1" fill="#2e3436"/><rect x="160" y="913.23" width="6" height="1.1" fill="#2e3436"/><rect x="156" y="923.12" width="10" height="1.1" fill="#2e3436"/><rect x="160" y="933.02" width="6" height="1.1" fill="#2e3436"/><rect x="160" y="942.91" width="6" height="1.1" fill="#2e3436"/></svg><div class="t" style="position:absolute;left:154px;top:282.24px;font-size:11px;line-height:11px;color:#2e3436;font-weight:normal;white-space:nowrap;">-</div><div class="t" style="position:absolute;left:153px;top:292.74px;font-size:11px;line-height:11px;color:#2e3436;font-weight:normal;white-space:nowrap;">5</div><div class="t" style="position:absolute;left:153px;top:303.24px;font-size:11px;line-height:11px;color:#2e3436;font-weight:normal;white-space:nowrap;">0</div><div class="t" style="position:absolute;left:153px;top:381.19px;font-size:11px;line-height:11px;color:#2e3436;font-weight:normal;white-space:nowrap;">0</div><div class="t" style="position:absolute;left:153px;top:480.14px;font-size:11px;line-height:11px;color:#2e3436;font-weight:normal;white-space:nowrap;">5</div><div class="t" style="position:absolute;left:153px;top:490.64px;font-size:11px;line-height:11px;color:#2e3436;font-weight:normal;white-space:nowrap;">0</div><div class="t" style="position:absolute;left:153px;top:579.09px;font-size:11px;line-height:11px;color:#2e3436;font-weight:normal;white-space:nowrap;">1</div><div class="t" style="position:absolute;left:153px;top:589.59px;font-size:11px;line-height:11px;color:#2e3436;font-weight:normal;white-space:nowrap;">0</div><div class="t" style="position:absolute;left:153px;top:600.09px;font-size:11px;line-height:11px;color:#2e3436;font-weight:normal;white-space:nowrap;">0</div><div class="t" style="position:absolute;left:153px;top:678.04px;font-size:11px;line-height:11px;color:#2e3436;font-weight:normal;white-space:nowrap;">1</div><div class="t" style="position:absolute;left:153px;top:688.54px;font-size:11px;line-height:11px;color:#2e3436;font-weight:normal;white-space:nowrap;">5</div><div class="t" style="position:absolute;left:153px;top:699.04px;font-size:11px;line-height:11px;color:#2e3436;font-weight:normal;white-space:nowrap;">0</div><div class="t" style="position:absolute;left:153px;top:776.99px;font-size:11px;line-height:11px;color:#2e3436;font-weight:normal;white-space:nowrap;">2</div><div class="t" style="position:absolute;left:153px;top:787.49px;font-size:11px;line-height:11px;color:#2e3436;font-weight:normal;white-space:nowrap;">0</div><div class="t" style="position:absolute;left:153px;top:797.99px;font-size:11px;line-height:11px;color:#2e3436;font-weight:normal;white-space:nowrap;">0</div><div class="t" style="position:absolute;left:153px;top:875.94px;font-size:11px;line-height:11px;color:#2e3436;font-weight:normal;white-space:nowrap;">2</div><div class="t" style="position:absolute;left:153px;top:886.44px;font-size:11px;line-height:11px;color:#2e3436;font-weight:normal;white-space:nowrap;">5</div><div class="t" style="position:absolute;left:153px;top:896.94px;font-size:11px;line-height:11px;color:#2e3436;font-weight:normal;white-space:nowrap;">0</div><div style="position:absolute;left:1546px;top:220px;width:19px;height:733px;background:#cecece;"></div><div style="position:absolute;left:1552.5px;top:289px;width:6px;height:660px;background:#7e8284;border-radius:3px;"></div><div style="position:absolute;left:1547px;top:203px;width:15.5px;height:15.5px;background:#f6f5f4;border:1px solid #cdc7c2;border-radius:3px;"></div><svg style="position:absolute;left:1547px;top:203px;" width="16" height="16" viewBox="0 0 16 16"><path d="M6 5.5 L8.5 4 L8.5 12 M6.5 12 L10.5 12" stroke="#777" stroke-width="1" fill="none"/><rect x="4.5" y="3" width="7.5" height="10.5" fill="none" stroke="#aaa" stroke-width="0.8"/></svg><div style="position:absolute;left:166px;top:953px;width:1380px;height:17px;background:#cecece;"></div><div style="position:absolute;left:169px;top:959px;width:1374px;height:6px;background:#7e8284;border-radius:3px;"></div><div style="position:absolute;left:1546px;top:953px;width:19px;height:17px;background:#cecece;"></div><div style="position:absolute;left:1546.5px;top:953.5px;width:17px;height:17px;background:#f4f2f0;border-radius:2px;"></div><svg style="position:absolute;left:1546px;top:953px;" width="19" height="18" viewBox="0 0 19 18"><defs><linearGradient id="gTri" x1="0" y1="0" x2="1" y2="1"><stop offset="0" stop-color="#80ff80"/><stop offset="0.5" stop-color="#80e0ff"/><stop offset="1" stop-color="#ff80ff"/></linearGradient></defs><path d="M2.5 1.5 L14.5 11 L4.5 16.5 Z" fill="url(#gTri)" opacity="0.5"/></svg><div style="position:absolute;left:96px;top:970px;width:1824px;height:22px;background:#f6f5f4;"></div><div style="position:absolute;left:96px;top:992px;width:1824px;height:12.5px;background:#cecece;"></div><svg style="position:absolute;left:0px;top:0px;" width="1920" height="1026" viewBox="0 0 1920 1026"><rect x="96.5" y="971.5" width="18" height="20" fill="#fff" stroke="#000"/><path d="M97 972L114 991M114 972L97 991" stroke="#800000" stroke-width="1.2"/><rect x="116.5" y="971.5" width="18" height="20" fill="#000000" stroke="#000"/><rect x="136.5" y="971.5" width="18" height="20" fill="#1a1a1a" stroke="#000"/><rect x="156.5" y="971.5" width="18" height="20" fill="#333333" stroke="#000"/><rect x="176.5" y="971.5" width="18" height="20" fill="#4d4d4d" stroke="#000"/><rect x="196.5" y="971.5" width="18" height="20" fill="#666666" stroke="#000"/><rect x="216.5" y="971.5" width="18" height="20" fill="#808080" stroke="#000"/><rect x="236.5" y="971.5" width="18" height="20" fill="#999999" stroke="#000"/><rect x="256.5" y="971.5" width="18" height="20" fill="#b3b3b3" stroke="#000"/><rect x="276.5" y="971.5" width="18" height="20" fill="#cccccc" stroke="#000"/><rect x="296.5" y="971.5" width="18" height="20" fill="#e6e6e6" stroke="#000"/><rect x="316.5" y="971.5" width="18" height="20" fill="#ececec" stroke="#000"/><rect x="336.5" y="971.5" width="18" height="20" fill="#f2f2f2" stroke="#000"/><rect x="356.5" y="971.5" width="18" height="20" fill="#f9f9f9" stroke="#000"/><rect x="376.5" y="971.5" width="18" height="20" fill="#ffffff" stroke="#000"/><rect x="396.5" y="971.5" width="18" height="20" fill="#800000" stroke="#000"/><rect x="416.5" y="971.5" width="18" height="20" fill="#ff0000" stroke="#000"/><rect x="436.5" y="971.5" width="18" height="20" fill="#808000" stroke="#000"/><rect x="456.5" y="971.5" width="18" height="20" fill="#ffff00" stroke="#000"/><rect x="476.5" y="971.5" width="18" height="20" fill="#008000" stroke="#000"/><rect x="496.5" y="971.5" width="18" height="20" fill="#00ff00" stroke="#000"/><rect x="516.5" y="971.5" width="18" height="20" fill="#008080" stroke="#000"/><rect x="536.5" y="971.5" width="18" height="20" fill="#00ffff" stroke="#000"/><rect x="556.5" y="971.5" width="18" height="20" fill="#000080" stroke="#000"/><rect x="576.5" y="971.5" width="18" height="20" fill="#0000ff" stroke="#000"/><rect x="596.5" y="971.5" width="18" height="20" fill="#800080" stroke="#000"/><rect x="616.5" y="971.5" width="18" height="20" fill="#ff00ff" stroke="#000"/><rect x="636.5" y="971.5" width="18" height="20" fill="#2b0000" stroke="#000"/><rect x="656.5" y="971.5" width="18" height="20" fill="#550000" stroke="#000"/><rect x="676.5" y="971.5" width="18" height="20" fill="#800000" stroke="#000"/><rect x="696.5" y="971.5" width="18" height="20" fill="#aa0000" stroke="#000"/><rect x="716.5" y="971.5" width="18" height="20" fill="#d40000" stroke="#000"/><rect x="736.5" y="971.5" width="18" height="20" fill="#ff0000" stroke="#000"/><rect x="756.5" y="971.5" width="18" height="20" fill="#ff2a2a" stroke="#000"/><rect x="776.5" y="971.5" width="18" height="20" fill="#ff5555" stroke="#000"/><rect x="796.5" y="971.5" width="18" height="20" fill="#ff8080" stroke="#000"/><rect x="816.5" y="971.5" width="18" height="20" fill="#ffaaaa" stroke="#000"/><rect x="836.5" y="971.5" width="18" height="20" fill="#ffd5d5" stroke="#000"/><rect x="856.5" y="971.5" width="18" height="20" fill="#280b0b" stroke="#000"/><rect x="876.5" y="971.5" width="18" height="20" fill="#501616" stroke="#000"/><rect x="896.5" y="971.5" width="18" height="20" fill="#782121" stroke="#000"/><rect x="916.5" y="971.5" width="18" height="20" fill="#a02c2c" stroke="#000"/><rect x="936.5" y="971.5" width="18" height="20" fill="#c83737" stroke="#000"/><rect x="956.5" y="971.5" width="18" height="20" fill="#d35f5f" stroke="#000"/><rect x="976.5" y="971.5" width="18" height="20" fill="#de8787" stroke="#000"/><rect x="996.5" y="971.5" width="18" height="20" fill="#e9afaf" stroke="#000"/><rect x="1016.5" y="971.5" width="18" height="20" fill="#f4d7d7" stroke="#000"/><rect x="1036.5" y="971.5" width="18" height="20" fill="#241c1c" stroke="#000"/><rect x="1056.5" y="971.5" width="18" height="20" fill="#483737" stroke="#000"/><rect x="1076.5" y="971.5" width="18" height="20" fill="#6c5353" stroke="#000"/><rect x="1096.5" y="971.5" width="18" height="20" fill="#916f6f" stroke="#000"/><rect x="1116.5" y="971.5" width="18" height="20" fill="#ac9393" stroke="#000"/><rect x="1136.5" y="971.5" width="18" height="20" fill="#c8b7b7" stroke="#000"/><rect x="1156.5" y="971.5" width="18" height="20" fill="#e3dbdb" stroke="#000"/><rect x="1176.5" y="971.5" width="18" height="20" fill="#2b1100" stroke="#000"/><rect x="1196.5" y="971.5" width="18" height="20" fill="#552200" stroke="#000"/><rect x="1216.5" y="971.5" width="18" height="20" fill="#803300" stroke="#000"/><rect x="1236.5" y="971.5" width="18" height="20" fill="#aa4400" stroke="#000"/><rect x="1256.5" y="971.5" width="18" height="20" fill="#d45500" stroke="#000"/><rect x="1276.5" y="971.5" width="18" height="20" fill="#ff6600" stroke="#000"/><rect x="1296.5" y="971.5" width="18" height="20" fill="#ff7f2a" stroke="#000"/><rect x="1316.5" y="971.5" width="18" height="20" fill="#ff9955" stroke="#000"/><rect x="1336.5" y="971.5" width="18" height="20" fill="#ffb380" stroke="#000"/><rect x="1356.5" y="971.5" width="18" height="20" fill="#ffccaa" stroke="#000"/><rect x="1376.5" y="971.5" width="18" height="20" fill="#ffe6d5" stroke="#000"/><rect x="1396.5" y="971.5" width="18" height="20" fill="#28170b" stroke="#000"/><rect x="1416.5" y="971.5" width="18" height="20" fill="#502d16" stroke="#000"/><rect x="1436.5" y="971.5" width="18" height="20" fill="#784421" stroke="#000"/><rect x="1456.5" y="971.5" width="18" height="20" fill="#a05a2c" stroke="#000"/><rect x="1476.5" y="971.5" width="18" height="20" fill="#c87137" stroke="#000"/><rect x="1496.5" y="971.5" width="18" height="20" fill="#d38d5f" stroke="#000"/><rect x="1516.5" y="971.5" width="18" height="20" fill="#deaa87" stroke="#000"/><rect x="1536.5" y="971.5" width="18" height="20" fill="#e9c6af" stroke="#000"/><rect x="1556.5" y="971.5" width="18" height="20" fill="#f4e3d7" stroke="#000"/><rect x="1576.5" y="971.5" width="18" height="20" fill="#241f1c" stroke="#000"/><rect x="1596.5" y="971.5" width="18" height="20" fill="#483e37" stroke="#000"/><rect x="1616.5" y="971.5" width="18" height="20" fill="#6c5d53" stroke="#000"/><rect x="1636.5" y="971.5" width="18" height="20" fill="#917c6f" stroke="#000"/><rect x="1656.5" y="971.5" width="18" height="20" fill="#ac9d93" stroke="#000"/><rect x="1676.5" y="971.5" width="18" height="20" fill="#c8beb7" stroke="#000"/><rect x="1696.5" y="971.5" width="18" height="20" fill="#e3dedb" stroke="#000"/><rect x="1716.5" y="971.5" width="18" height="20" fill="#2b2200" stroke="#000"/><rect x="1736.5" y="971.5" width="18" height="20" fill="#554400" stroke="#000"/><rect x="1756.5" y="971.5" width="18" height="20" fill="#806600" stroke="#000"/><rect x="1776.5" y="971.5" width="18" height="20" fill="#aa8800" stroke="#000"/><rect x="1796.5" y="971.5" width="18" height="20" fill="#d4aa00" stroke="#000"/><rect x="1816.5" y="971.5" width="18" height="20" fill="#ffcc00" stroke="#000"/><rect x="1836.5" y="971.5" width="18" height="20" fill="#ffdd55" stroke="#000"/><rect x="1856.5" y="971.5" width="18" height="20" fill="#ffe680" stroke="#000"/><rect x="1876.5" y="971.5" width="18" height="20" fill="#ffeeaa" stroke="#000"/><rect x="1896.5" y="971.5" width="18" height="20" fill="#fff6d5" stroke="#000"/></svg><div style="position:absolute;left:99px;top:996px;width:404px;height:6px;background:#7e8284;border-radius:3px;"></div><div style="position:absolute;left:96px;top:1004px;width:1824px;height:22px;background:#f6f5f4;"></div><div class="t" style="position:absolute;left:98.5px;top:1007.56px;font-size:14.7px;line-height:14.7px;color:#2e3436;font-weight:normal;white-space:nowrap;">Füllung:</div><div style="position:absolute;left:153px;top:1005px;width:32px;height:19.5px;background:#000;border-radius:4px;"></div><div class="t" style="position:absolute;left:230.2px;top:1017.11px;font-size:17px;line-height:17px;color:#2e3436;font-weight:normal;white-space:nowrap;">O:</div><div style="position:absolute;left:247px;top:1005.5px;width:66.3px;height:40px;background:#fff;border:1px solid #cdc7c2;border-radius:5px;"></div><div style="position:absolute;left:279px;top:1006.5px;width:1px;height:20px;background:#ebe8e6;"></div><div style="position:absolute;left:296.6px;top:1006.5px;width:1px;height:20px;background:#ebe8e6;"></div><div class="t" style="position:absolute;left:250.6px;top:1017.11px;font-size:17px;line-height:17px;color:#000;font-weight:normal;white-space:nowrap;letter-spacing:-0.5px;">100</div><div style="position:absolute;left:283px;top:1024px;width:9.5px;height:2px;background:#2e3436;"></div><div style="position:absolute;left:300px;top:1024px;width:9.5px;height:2px;background:#c8c8c8;"></div><div style="position:absolute;left:304px;top:1019.5px;width:1.6px;height:7px;background:#c8c8c8;"></div><div style="position:absolute;left:316.25px;top:1006px;width:1px;height:20px;background:#dcd9d5;"></div><svg style="position:absolute;left:320px;top:1010px;" width="70" height="16" viewBox="0 0 70 16"><path d="M9 12.5 Q16 6 23 12.5 Q16 19 9 12.5 Z" fill="#fff" stroke="#111" stroke-width="1.5"/><circle cx="16" cy="12.8" r="3" fill="#111"/><path d="M10 8 L11.5 10 M13 6 L13.8 9 M16 5.5 L16 8.5 M19 6 L18.2 9 M22 8 L20.5 10" stroke="#111" stroke-width="1.2"/><path d="M47 12 L47 10 Q51.5 4 56 10" stroke="#333" stroke-width="1.5" fill="none"/><rect x="48" y="13" width="10" height="6" fill="#f0d020" stroke="#333" stroke-width="0.9"/></svg><div style="position:absolute;left:391.4px;top:1006px;width:92.6px;height:40px;background:linear-gradient(#f6f5f4,#edebe9);border:1px solid #cdc7c2;border-radius:5px;"></div><div class="t" style="position:absolute;left:403px;top:1019.65px;font-size:14px;line-height:14px;color:#2e3436;font-weight:bold;white-space:nowrap;letter-spacing:-0.8px;">•Ebene 1</div><svg style="position:absolute;left:462px;top:1022px;" width="10" height="6" viewBox="0 0 10 6"><path d="M0 0.5H10L5 6Z" fill="#2e3436"/></svg><div class="t" style="position:absolute;left:487px;top:1017.11px;font-size:17px;line-height:17px;color:#2e3436;font-weight:normal;white-space:nowrap;">Zum Auswählen oder Erstellen eines Textobjekts <b>klicken</b>, <b>Ziehen</b> um Fließtext zu erstellen; anschließend schreiben.</div><div style="position:absolute;left:1615px;top:1006px;width:1px;height:20px;background:#dcd9d5;"></div><div class="t" style="position:absolute;left:1626px;top:1007.56px;font-size:14.7px;line-height:14.7px;color:#2e3436;font-weight:normal;white-space:nowrap;">X:</div><div class="t" style="position:absolute;left:1653.5px;top:1007.56px;font-size:14.7px;line-height:14.7px;color:#2e3436;font-weight:normal;white-space:nowrap;letter-spacing:1.4px;">332,34</div><div class="t" style="position:absolute;left:1719px;top:1017.11px;font-size:17px;line-height:17px;color:#2e3436;font-weight:normal;white-space:nowrap;">Z:</div><div style="position:absolute;left:1741px;top:1006px;width:110px;height:40px;background:#fff;border:1px solid #cdc7c2;border-radius:5px;"></div><div style="position:absolute;left:1807.5px;top:1007px;width:1px;height:20px;background:#ebe8e6;"></div><div style="position:absolute;left:1828.8px;top:1007px;width:1px;height:20px;background:#ebe8e6;"></div><div class="t" style="position:absolute;left:1751.8px;top:1017.11px;font-size:17px;line-height:17px;color:#000;font-weight:normal;white-space:nowrap;">198%</div><div style="position:absolute;left:1813px;top:1024.5px;width:10px;height:2px;background:#2e3436;"></div><div style="position:absolute;left:1834.5px;top:1024.5px;width:10px;height:2px;background:#2e3436;"></div><div style="position:absolute;left:1838.7px;top:1019.5px;width:1.8px;height:7px;background:#2e3436;"></div><div class="t" style="position:absolute;left:1861.6px;top:1017.11px;font-size:17px;line-height:17px;color:#2e3436;font-weight:normal;white-space:nowrap;">R:</div><div style="position:absolute;left:1884.6px;top:1006px;width:60px;height:40px;background:#fff;border:1px solid #cdc7c2;border-radius:5px;"></div><div class="t" style="position:absolute;left:1905px;top:1017.11px;font-size:17px;line-height:17px;color:#000;font-weight:normal;white-space:nowrap;">0</div><div style="position:absolute;left:1565px;top:202px;width:355px;height:768px;background:#f6f5f4;"></div><div style="position:absolute;left:1565px;top:220px;width:1px;height:750px;background:#c0bdb9;"></div><div class="t" style="position:absolute;left:1583px;top:212.50px;font-size:14.3px;line-height:14.3px;color:#2e3436;font-weight:normal;white-space:nowrap;letter-spacing:0.25px;">Ausrichten und verteilen (Umschalt+Strg+A)</div><div style="position:absolute;left:1566px;top:235.5px;width:354px;height:1.5px;background:#d8d4d0;"></div><div class="t" style="position:absolute;left:1569.4px;top:243.56px;font-size:14.7px;line-height:14.7px;color:#2e3436;font-weight:bold;white-space:nowrap;">Ausrichten</div><div class="t" style="position:absolute;left:1750.6px;top:274.36px;font-size:14.7px;line-height:14.7px;color:#2e3436;font-weight:normal;white-space:nowrap;">Relativ zu:</div><div style="position:absolute;left:1821.3px;top:264.5px;width:120px;height:33px;background:linear-gradient(#f6f5f4,#edebe9);border:1px solid #cdc7c2;border-radius:5px;"></div><div class="t" style="position:absolute;left:1832.6px;top:274.36px;font-size:14.7px;line-height:14.7px;color:#2e3436;font-weight:normal;white-space:nowrap;">Zuerst gewählt</div><div class="t" style="position:absolute;left:1569.4px;top:373.56px;font-size:14.7px;line-height:14.7px;color:#2e3436;font-weight:bold;white-space:nowrap;">Verteilen</div><div class="t" style="position:absolute;left:1569.4px;top:469.56px;font-size:14.7px;line-height:14.7px;color:#2e3436;font-weight:bold;white-space:nowrap;">Anordnen</div><div class="t" style="position:absolute;left:1569.4px;top:531.56px;font-size:14.7px;line-height:14.7px;color:#2e3436;font-weight:bold;white-space:nowrap;">Überlappungen entfernen</div><div class="t" style="position:absolute;left:1733.4px;top:561.96px;font-size:14.7px;line-height:14.7px;color:#2e3436;font-weight:normal;white-space:nowrap;">H:</div><div style="position:absolute;left:1750.3px;top:552.8px;width:97px;height:32.5px;background:#fff;border:1px solid #cdc7c2;border-radius:5px;"></div><div style="position:absolute;left:1813.3px;top:553.8px;width:1px;height:30.5px;background:#ebe8e6;"></div><div style="position:absolute;left:1830.3px;top:553.8px;width:1px;height:30.5px;background:#ebe8e6;"></div><div style="position:absolute;left:1817px;top:568px;width:10px;height:2px;background:#2e3436;"></div><div style="position:absolute;left:1834px;top:568px;width:10px;height:2px;background:#2e3436;"></div><div style="position:absolute;left:1838px;top:564px;width:2px;height:10px;background:#2e3436;"></div><div class="t" style="position:absolute;left:1753.8px;top:561.86px;font-size:14.7px;line-height:14.7px;color:#000;font-weight:normal;white-space:nowrap;letter-spacing:1.1px;">0,0</div><div class="t" style="position:absolute;left:1851.6px;top:561.96px;font-size:14.7px;line-height:14.7px;color:#2e3436;font-weight:normal;white-space:nowrap;">V:</div><div style="position:absolute;left:1866.6px;top:552.8px;width:97px;height:32.5px;background:#fff;border:1px solid #cdc7c2;border-radius:5px;"></div><div class="t" style="position:absolute;left:1870px;top:561.86px;font-size:14.7px;line-height:14.7px;color:#000;font-weight:normal;white-space:nowrap;letter-spacing:1.1px;">0,0</div><div style="position:absolute;left:1566px;top:589px;width:354px;height:1.5px;background:#d8d4d0;"></div><div class="t" style="position:absolute;left:1582px;top:601.90px;font-size:14.3px;line-height:14.3px;color:#2e3436;font-weight:normal;white-space:nowrap;letter-spacing:0.15px;">Füllung und Kontur (Umschalt+Strg+F)</div><div style="position:absolute;left:1566px;top:624.5px;width:354px;height:1.5px;background:#d8d4d0;"></div><div style="position:absolute;left:1569px;top:629px;width:360px;height:345px;background:#fff;border:1px solid #cdc7c2;"></div><div style="position:absolute;left:1570px;top:630px;width:350px;height:36px;background:#e2dfdc;border-bottom:1px solid #cdc7c2;"></div><div style="position:absolute;left:1578px;top:663px;width:92px;height:3.8px;background:#3584e4;"></div><div class="t" style="position:absolute;left:1610.25px;top:641.31px;font-size:14.7px;line-height:14.7px;color:#2e3436;font-weight:normal;white-space:nowrap;">Füllung</div><div class="t" style="position:absolute;left:1710px;top:641.31px;font-size:14.7px;line-height:14.7px;color:#2e3436;font-weight:normal;white-space:nowrap;">Farbe der Kontur</div><div class="t" style="position:absolute;left:1872px;top:641.31px;font-size:14.7px;line-height:14.7px;color:#2e3436;font-weight:normal;white-space:nowrap;">Muster</div><div style="position:absolute;left:1614.4px;top:675.3px;width:35.2px;height:33.2px;background:#d6d1cd;border-radius:6px;"></div><div class="t" style="position:absolute;left:1578.75px;top:720.56px;font-size:14.7px;line-height:14.7px;color:#2e3436;font-weight:bold;white-space:nowrap;letter-spacing:-0.35px;">Einfache Farbe</div><div style="position:absolute;left:1578.2px;top:742.2px;width:68.39999999999986px;height:33.4px;background:#d6d1cd;border:1px solid #cfcac5;border-radius:5px;"></div><div class="t" style="position:absolute;left:1578.2px;width:68.39999999999986px;top:752.26px;font-size:14.7px;line-height:14.7px;color:#2e3436;text-align:center;">RGB</div><div style="position:absolute;left:1649.6px;top:742.2px;width:67.90000000000009px;height:33.4px;background:linear-gradient(#f6f5f4,#edebe9);border:1px solid #cdc7c2;border-radius:5px;"></div><div class="t" style="position:absolute;left:1649.6px;width:67.90000000000009px;top:752.26px;font-size:14.7px;line-height:14.7px;color:#2e3436;text-align:center;">HSL</div><div style="position:absolute;left:1720.3px;top:742.2px;width:68.10000000000014px;height:33.4px;background:linear-gradient(#f6f5f4,#edebe9);border:1px solid #cdc7c2;border-radius:5px;"></div><div class="t" style="position:absolute;left:1720.3px;width:68.10000000000014px;top:752.26px;font-size:14.7px;line-height:14.7px;color:#2e3436;text-align:center;">HSV</div><div style="position:absolute;left:1791.6px;top:742.2px;width:67.90000000000009px;height:33.4px;background:linear-gradient(#f6f5f4,#edebe9);border:1px solid #cdc7c2;border-radius:5px;"></div><div class="t" style="position:absolute;left:1791.6px;width:67.90000000000009px;top:752.26px;font-size:14.7px;line-height:14.7px;color:#2e3436;text-align:center;">CMYK</div><div style="position:absolute;left:1862.3px;top:742.2px;width:77.70000000000005px;height:33.4px;background:linear-gradient(#f6f5f4,#edebe9);border:1px solid #cdc7c2;border-radius:5px;"></div><div class="t" style="position:absolute;left:1871.8px;top:752.26px;font-size:14.7px;line-height:14.7px;color:#2e3436;font-weight:normal;white-space:nowrap;">Farbrad</div><div class="t" style="position:absolute;left:1586.25px;top:789.16px;font-size:14.7px;line-height:14.7px;color:#2e3436;font-weight:normal;white-space:nowrap;">R:</div><div style="position:absolute;left:1607px;top:779px;width:310px;height:33.5px;background:linear-gradient(90deg,#000,#f00);"></div><div class="t" style="position:absolute;left:1586.25px;top:825.16px;font-size:14.7px;line-height:14.7px;color:#2e3436;font-weight:normal;white-space:nowrap;">G:</div><div style="position:absolute;left:1607px;top:815px;width:310px;height:33.5px;background:linear-gradient(90deg,#000,#0f0);"></div><div class="t" style="position:absolute;left:1586.25px;top:861.16px;font-size:14.7px;line-height:14.7px;color:#2e3436;font-weight:normal;white-space:nowrap;">B:</div><div style="position:absolute;left:1607px;top:851px;width:310px;height:33.5px;background:linear-gradient(90deg,#000,#00f);"></div><div class="t" style="position:absolute;left:1586.25px;top:897.16px;font-size:14.7px;line-height:14.7px;color:#2e3436;font-weight:normal;white-space:nowrap;">A:</div><div style="position:absolute;left:1607px;top:887px;width:310px;height:33.5px;background:linear-gradient(90deg,rgba(0,0,0,0),#000),conic-gradient(#666 25%,#999 0 50%,#666 0 75%,#999 0);background-size:100% 100%,16px 16px;"></div><svg style="position:absolute;left:0px;top:0px;" width="1920" height="1026" viewBox="0 0 1920 1026"><rect x="527.5" y="380.5" width="296" height="296" fill="none" stroke="#555" stroke-width="1.1"/><rect x="732" y="379" width="2" height="282" fill="#fff" opacity="0.7"/>
<g fill="#000">
<path d="M669.3 449.8 Q682.5 453 695.7 449.8 C693 456 690 470 690.4 477.5 C690.7 486 693 495 698 502 C704 509 714 512 719.5 516 Q723 519 720.5 521.9 L644.5 521.9 Q642 519 645.5 516 C651 512 661 509 667 502 C672 495 674.3 486 674.6 477.5 C675 470 672 456 669.3 449.8 Z"/>
<path d="M646.5 524.2 L718.5 524.2 Q721 524.5 719.5 527 C717 534 713 543 707.1 547.7 C703 551 697 554 688.4 555.9 C686 557.5 686 560 686 563 L686 569.6 C686.5 574 690.7 578.5 690.7 583 Q690.5 587.2 685 587 Q682.5 586.3 680 587 Q674.5 587.2 674.3 583 C674.3 578.5 678.5 574 679 569.6 L679 563 C679 560 679 557.5 676.6 555.9 C668 554 662 551 657.9 547.7 C652 543 648 534 645.5 527 Q644 524.5 646.5 524.2 Z"/>
</g>
<g fill="none" stroke="#000" stroke-width="3" stroke-linecap="round">
<path d="M656 467 Q664 468 667.5 462 Q670.5 455 668.5 450 Q664 443 654 442.8 Q643 443.5 640.3 456 Q640 468 648 484 Q655 496 658.5 502 Q660 506 660 508"/>
<path d="M709 467 Q701 468 697.5 462 Q694.5 455 696.5 450 Q701 443 711 442.8 Q722 443.5 724.7 456 Q725 468 717 484 Q710 496 706.5 502 Q705 506 705 508"/>
</g>
<circle cx="654.9" cy="460.4" r="6.6" fill="#000"/>
<circle cx="710.1" cy="460.4" r="6.6" fill="#000"/>
<rect x="640" y="442.5" width="85.5" height="144.5" fill="none" stroke="#3535e8" stroke-width="0.9" stroke-dasharray="3 2.6"/><rect x="630" y="584.5" width="5" height="5" fill="#fff" stroke="#000" stroke-width="1.2"/><path d="M718.5 582.5 L722.5 586.8 L718.5 591 L714.3 586.8 Z" fill="#fff" stroke="#000" stroke-width="1.2"/><path d="M161.5 544 L166 548 L161.5 552 Z" fill="#2e3436"/><path d="M1180 214.5 L1189 214.5 L1184.5 219 Z" fill="#2e3436"/><path fill="#e80000" shape-rendering="crispEdges" d="M190 548 L207 548 L208.5 567.5 L210 568.5 L211 596 L211 618.7 L193.9 618.7 L192.9 582.6 L181.2 597.2 L181 599.7 L164.1 599.7 L164.1 583 L172.4 569 L184 553.9 Z"/><path fill="#e80000" shape-rendering="crispEdges" d="M268.9 161 L285.6 161 L286 163.2 L293.5 166.2 L297 173.7 L296.6 195.2 L291.8 203.5 L285.2 208.3 L285.2 210.5 L301.8 212.7 L301.8 229.4 L284.7 229.4 L269 226.3 L258.9 221 L255.8 216.7 L256.2 202.6 L261 197.4 L270.7 190.8 L277.7 185 L277.7 182.5 L269.4 179.8 Z"/></svg><svg style="position:absolute;left:0px;top:0px;" width="1920" height="1026" viewBox="0 0 1920 1026"><defs>
<linearGradient id="gBlue" x1="0" y1="0" x2="1" y2="1"><stop offset="0" stop-color="#f4f8fc"/><stop offset="1" stop-color="#8fb0d0"/></linearGradient>
<linearGradient id="gPink" x1="0" y1="0" x2="0.6" y2="1"><stop offset="0" stop-color="#fff"/><stop offset="1" stop-color="#f48c9c"/></linearGradient>
<linearGradient id="gYel" x1="0" y1="0" x2="1" y2="1"><stop offset="0" stop-color="#fffbd0"/><stop offset="1" stop-color="#e8d060"/></linearGradient>
<linearGradient id="gGreen" x1="0" y1="0" x2="1" y2="1"><stop offset="0" stop-color="#e0f4e0"/><stop offset="1" stop-color="#30a040"/></linearGradient>
<linearGradient id="gGray" x1="0" y1="0" x2="0" y2="1"><stop offset="0" stop-color="#fff"/><stop offset="1" stop-color="#909090"/></linearGradient>
<linearGradient id="gBlue2" x1="0" y1="0" x2="1" y2="1"><stop offset="0" stop-color="#e8f0f8"/><stop offset="1" stop-color="#a8c4e0"/></linearGradient>
</defs><path d="M115 213 L115 228.5 L118.6 225.2 L121.6 231.5 L124.2 230.3 L121.3 224 L125.5 223.5 Z" fill="#000"/><path d="M116 249 Q122 245 130.5 247.5 M114 252 Q110 256 111 265" stroke="#777" stroke-width="1.1" fill="none"/><rect x="112.6" y="247.6" width="6" height="6" fill="#8888ff" stroke="#0000ff" stroke-width="1.6"/><rect x="109.5" y="263" width="4.5" height="4.5" fill="#ddf" stroke="#5555ff" stroke-width="1"/><rect x="128.5" y="245.3" width="4.5" height="4.5" fill="#ddf" stroke="#5555ff" stroke-width="1"/><path d="M118.5 253 L130.5 261.5 L124.5 266 Z" fill="#000"/><rect x="100" y="280" width="43" height="1" fill="#dcd9d5"/><rect x="100" y="464.5" width="43" height="1" fill="#dcd9d5"/><rect x="100" y="614.5" width="43" height="1" fill="#dcd9d5"/><rect x="100" y="764.5" width="43" height="1" fill="#dcd9d5"/><rect x="100" y="914.5" width="43" height="1" fill="#dcd9d5"/><rect x="111.5" y="294.5" width="19" height="19" fill="url(#gBlue)" stroke="#000" stroke-width="1.5"/><circle cx="121" cy="337.7" r="9.6" fill="url(#gPink)" stroke="#222" stroke-width="1.3"/><path d="M110.5 368 L117 362.5 L124 364.5 L125 372 L117.5 376.5 Z" fill="url(#gYel)" stroke="#222" stroke-width="1"/><path d="M124.5 366 L126.5 371.5 L132.5 372.2 L128 376 L129.5 382 L124.5 378.7 L119.3 381.5 L120.5 375.8 L116.5 371.8 L122.3 371.2 Z" fill="#f4e27a" stroke="#222" stroke-width="1"/><path d="M111.5 399 L121.5 393.8 L131.3 399.5 L131.3 411 L121.5 417 L111.5 411.5 Z" fill="#8a8ad0" stroke="#222" stroke-width="1.1"/><path d="M112.2 399.4 L121.5 394.5 L121.5 407 L112.2 411 Z" fill="#a0a0dc"/><path d="M121.5 394.5 L130.6 399.8 L130.6 410.6 L121.5 407 Z" fill="#e4e4fa"/><path d="M112.2 411 L121.5 407 L130.6 410.6 L121.5 416.2 Z" fill="#5050a8"/><path d="M120 441 Q121.5 439 123 441 Q124 445 119.5 445.5 Q114.5 445 115 439.5 Q116 434 122 434 Q128 435 128 441.5 Q127.5 449 119.5 449.5 Q111 449 110.5 440.5 Q111 431 121 430.5 Q131 431 131.5 442 Q131.5 447 129.5 449.5" fill="none" stroke="#111" stroke-width="1.3"/><path d="M111 476.5 L123 476.5 M112 477 Q119 484 118.5 497.5 M114 497.5 L124 497.5" stroke="#111" stroke-width="1.1" fill="none"/><rect x="109.5" y="495" width="4.5" height="4.5" fill="#fff" stroke="#000" stroke-width="1.1"/><rect x="122.5" y="496" width="3" height="3" fill="#fff" stroke="#000" stroke-width="0.8"/><path d="M128.5 475 L134.5 478.5 L130 488 L124 484.5 Z" fill="#5a9ad0" stroke="#1a2a4a" stroke-width="0.9"/><path d="M124 484.5 L130 488 L129 490.5 L123 487 Z" fill="#f0c030" stroke="#333" stroke-width="0.7"/><path d="M123 487 L129 490.5 L121.5 497.5 Z" fill="#111"/><path d="M111.5 511.5 Q114 508.5 115.5 511 Q116 515 111 520 Q117 520.5 118 526 Q119 532 123 531.5 Q128 531 130 526" stroke="#111" stroke-width="1.2" fill="none"/><path d="M127 509.5 L134 513.5 L127 527.5 L120.5 524 Z" fill="#f0b820" stroke="#222" stroke-width="0.9"/><path d="M129 510.5 L134 513.5 L131 519.5 Z" fill="#f8d860"/><path d="M120.5 524 L127 527.5 L121 531.5 Z" fill="#fff4d8" stroke="#222" stroke-width="0.9"/><path d="M110.5 546 Q116 540.5 122 545.5 Q115.5 548 116 557 Q117 565 123.5 565.5 L132 562.5 Q128 569.5 119 569 Q110.5 566.5 111 556 Q111 550 110.5 546 Z" fill="#111"/><path d="M126 545.5 L133.5 548.5 L131.5 553 L124 550 Z" fill="#4a8ec4" stroke="#111" stroke-width="0.8"/><path d="M124 550 L131.5 553 L130.8 555 L123.3 552 Z" fill="#d02020"/><path d="M123.3 552 L130.8 555 Q129 562 121.5 566.5 Q120.5 558 123.3 552 Z" fill="#f0c030" stroke="#111" stroke-width="0.9"/><path d="M127 556 L122.5 565" stroke="#111" stroke-width="0.7"/></svg><div style="position:absolute;left:100.7px;top:574.4px;width:41.7px;height:32.2px;background:#d6d1cd;border-radius:7px;"></div><svg style="position:absolute;left:0px;top:0px;" width="1920" height="1026" viewBox="0 0 1920 1026"><path d="M109.5 599 L116.5 580 L121.5 580 L128.5 599 L123.8 599 L122.3 594.8 L115.7 594.8 L114.2 599 Z M116.9 591.2 L121.1 591.2 L119 585 Z" fill="#1a1a1a" fill-rule="evenodd"/><path d="M127.8 581.5 L133 581.5 M130.4 581.5 L130.4 599.5 M127.8 599.5 L133 599.5" stroke="#000" stroke-width="1.1"/><rect x="110" y="627" width="21" height="21" fill="url(#gGreen)" stroke="#3a9a4a" stroke-width="0.8"/><path d="M115 630.5 L127 644" stroke="#333" stroke-width="1.2"/><rect x="112.5" y="628.5" width="4.5" height="4.5" rx="1.5" fill="#fff" stroke="#333" stroke-width="1.1"/><rect x="124.5" y="641.5" width="4.5" height="4.5" rx="1.5" fill="#fff" stroke="#333" stroke-width="1.1"/><path d="M113.5 664 Q121 667 128.5 664 Q126 671.5 128.5 679 Q121 676 113.5 679 Q116 671.5 113.5 664 Z" fill="#5aa8a0" stroke="#333" stroke-width="0.6"/><rect x="111.5" y="662" width="4" height="4" fill="#fff" stroke="#000" stroke-width="1.1"/><rect x="126.5" y="662" width="4" height="4" fill="#fff" stroke="#000" stroke-width="1.1"/><rect x="111.5" y="677" width="4" height="4" fill="#fff" stroke="#000" stroke-width="1.1"/><rect x="126.5" y="677" width="4" height="4" fill="#fff" stroke="#000" stroke-width="1.1"/><path d="M114 712 L124 700 L127 703 L117 713.5 Z" fill="#9cc4e4" stroke="#222" stroke-width="0.9"/><path d="M123 699 L130 694 Q134 696 132 700 L127 705 Z" fill="#111"/><ellipse cx="114" cy="716" rx="1.6" ry="2.3" fill="#5a90c0"/><ellipse cx="120.5" cy="750" rx="10.5" ry="2.5" fill="#90dc90" stroke="#2a6a3a" stroke-width="0.8"/><path d="M116 736 L129 729.5 Q133 729 133.5 734 L133.5 741 Q133 744.5 129.5 745 L119.5 748 Z" fill="#6aa8dc" stroke="#1a3a6a" stroke-width="0.9"/><ellipse cx="117.5" cy="742" rx="2.6" ry="6.3" transform="rotate(-25 117.5 742)" fill="#70c870" stroke="#1a3a6a" stroke-width="0.9"/><path d="M115.5 745 Q114 748 114.5 750" stroke="#70c870" stroke-width="2" fill="none"/><path d="M117 736 Q118 729 120.5 730.5 L121.5 740" stroke="#333" stroke-width="0.8" fill="none"/><circle cx="121.5" cy="740.5" r="1" fill="#fff" stroke="#333" stroke-width="0.6"/><path d="M109.5 789 L114 789 Q117 781 122 779.5 Q128 778 130.5 782 Q126 781 124.5 784 Q123 788 128 789 L131 789 L131 800 L109.5 800 Z" fill="url(#gGray)"/><path d="M109.5 789 L114 789 Q117 781 122 779.5 Q128 778 130.5 782 Q126 781 124.5 784 Q123 788 128 789 L131 789" stroke="#222" stroke-width="1" fill="none"/><path d="M119.5 820 L129 818 L132 831.5 Q127 834 121.5 832 Z" fill="#3aa030" stroke="#1a4a1a" stroke-width="0.8"/><rect x="120.5" y="815" width="6" height="3.5" fill="#e8c030" stroke="#333" stroke-width="0.6"/><circle cx="112.5" cy="812.5" r="0.9" fill="#111"/><circle cx="114.5" cy="815" r="0.9" fill="#111"/><circle cx="112" cy="817" r="0.9" fill="#111"/><circle cx="116" cy="818" r="0.9" fill="#111"/><circle cx="113.5" cy="822" r="0.9" fill="#111"/><path d="M118 849 L124 844.5 L131 852 L125 856.5 Z" fill="#f0b090" stroke="#111" stroke-width="1"/><path d="M113 858 L118 849 L125 856.5 L121 866.5 Z" fill="#e8b090"/><path d="M113 858 L121 866.5 L125 863 L116.5 853 Z" fill="#3030e0" stroke="#111" stroke-width="1"/><path d="M109 866.5 L116 866.5 M124 866.5 L132 866.5" stroke="#111" stroke-width="1"/><path d="M122 882 L127.5 886 L127.5 893 M115.5 886 L113 893" stroke="#111" stroke-width="0.9" fill="none"/><rect x="114.5" y="878" width="8" height="7" fill="#a8c8e8" stroke="#111" stroke-width="1"/><rect x="109.5" y="894" width="8.5" height="7" fill="#a8c8e8" stroke="#111" stroke-width="1"/><rect x="124.5" y="894" width="8.5" height="7" fill="#a8c8e8" stroke="#111" stroke-width="1"/><rect x="117.5" y="888" width="8" height="5" fill="#f0c830" stroke="#111" stroke-width="1"/><path d="M119.5 946 L125 950.5 L119.5 955 Z" fill="#2e3436"/><rect x="148.5" y="202.5" width="17" height="17" rx="3" fill="#f6f5f4" stroke="#d8d4d0"/><path d="M153 210 L153 207.5 Q157 202.5 161 207.5 L161 210" stroke="#333" stroke-width="1.5" fill="none"/><rect x="151.5" y="209.5" width="11" height="7.5" rx="1" fill="#f0c020" stroke="#333" stroke-width="0.9"/><rect x="156.3" y="211.5" width="1.5" height="3" fill="#222"/></svg><svg style="position:absolute;left:0px;top:0px;" width="1920" height="1026" viewBox="0 0 1920 1026"><path d="M113 89.2 L115.8 92 L113 94.8 L110.2 92 Z" fill="#b8b8ff" stroke="#3333ff" stroke-width="1.6"/><path d="M115 94 L120 99" stroke="#000" stroke-width="1.5"/><path d="M121.3 100.3 L116.5 99.6 L120.6 95.5 Z" fill="#000"/><path d="M123 99.2 L125.8 102 L123 104.8 L120.2 102 Z" fill="#b8b8ff" stroke="#2a8a3a" stroke-width="1.6"/><path d="M164 89.2 L166.8 92 L164 94.8 L161.2 92 Z" fill="#b8b8ff" stroke="#3333ff" stroke-width="1.6"/><path d="M166 94 L171 99" stroke="#000" stroke-width="1.5"/><path d="M172.3 100.3 L167.5 99.6 L171.6 95.5 Z" fill="#000"/><path d="M174 99.2 L176.8 102 L174 104.8 L171.2 102 Z" fill="#b8b8ff" stroke="#2a8a3a" stroke-width="1.6"/><path d="M198 102 L212 102 M211.5 102 L211.5 88" stroke="#c4dccc" stroke-width="1.3" stroke-dasharray="1.5 1.3"/><path d="M235 102 L248 102 M248.5 102 L248.5 89" stroke="#c4dccc" stroke-width="1.3" stroke-dasharray="1.5 1.3"/><path d="M248 99.5 L250.5 102 L248 104.5 L245.5 102 Z" fill="#e0ece4" stroke="#c4dccc" stroke-width="1.2"/><path d="M272 102 L285 102 M285 102 L285 89" stroke="#c4dccc" stroke-width="1.3" stroke-dasharray="1.5 1.3"/><path d="M285 90.5 L287.5 93 L285 95.5 L282.5 93 Z" fill="#e0ece4" stroke="#c4dccc" stroke-width="1.2"/><path d="M309 102 L322 102 M322 102 L322 89" stroke="#c4dccc" stroke-width="1.3" stroke-dasharray="1.5 1.3"/><circle cx="313.5" cy="93" r="2" fill="none" stroke="#c4dccc" stroke-width="1.2"/><path d="M363 89.2 L365.8 92 L363 94.8 L360.2 92 Z" fill="#b8b8ff" stroke="#3333ff" stroke-width="1.6"/><path d="M365 94 L370 99" stroke="#000" stroke-width="1.5"/><path d="M371.3 100.3 L366.5 99.6 L370.6 95.5 Z" fill="#000"/><path d="M373 99.2 L375.8 102 L373 104.8 L370.2 102 Z" fill="#b8b8ff" stroke="#2a8a3a" stroke-width="1.6"/><path d="M397.5 90.5 Q405 92 407.5 98 Q407 102 404.5 103 Q409.5 103 412.5 97.5" stroke="#1a8a1a" stroke-width="1.6" fill="none"/><path d="M435 104 L449 90 M435 98.5 L449 95" stroke="#444" stroke-width="1"/><path d="M442 94.8 L444.2 97 L442 99.2 L439.8 97 Z" fill="#9090ff" stroke="#2a8a3a" stroke-width="1.3"/><path d="M472 89.5 Q481 91 482 99 Q482 102 478.6 102 M481 101 Q484 100 486.5 97" stroke="#555" stroke-width="1.1" fill="none"/><path d="M478.6 99.2 L481.40000000000003 102 L478.6 104.8 L475.8 102 Z" fill="#9090ff" stroke="#2a8a3a" stroke-width="1.5"/><path d="M509 89.5 Q513 90 516 92.5 Q520 95 519.5 98 Q518 101 516 102.5 M519.5 98 L523.5 97" stroke="#555" stroke-width="1.1" fill="none"/><rect x="513" y="90" width="5.5" height="5" fill="#9090ff" stroke="#2a8a3a" stroke-width="1.4"/><path d="M547 102 L549.5 95.5 M549 104 L552 97 M554 97 L556.5 90 M556 99 L559 92 M546 101 L560 92" stroke="#d02020" stroke-width="1.2"/><path d="M552.5 94.8 L554.7 97 L552.5 99.2 L550.3 97 Z" fill="#9090ff" stroke="#2a8a3a" stroke-width="1.3"/><path d="M599 89.2 L601.8 92 L599 94.8 L596.2 92 Z" fill="#b8b8ff" stroke="#3333ff" stroke-width="1.6"/><path d="M601 94 L606 99" stroke="#000" stroke-width="1.5"/><path d="M607.3 100.3 L602.5 99.6 L606.6 95.5 Z" fill="#000"/><path d="M609 99.2 L611.8 102 L609 104.8 L606.2 102 Z" fill="#b8b8ff" stroke="#2a8a3a" stroke-width="1.6"/><path d="M633 102 L646.5 102 L646.5 89" stroke="#888" stroke-width="1.5" fill="none"/><circle cx="638.5" cy="94.5" r="2" fill="#b0e0b0" stroke="#2a8a3a" stroke-width="1.2"/><path d="M671.5 94.5 L678.5 94.5 M675 91 L675 98" stroke="#111" stroke-width="1.3"/><path d="M670 102 L683 102 M683.5 102 L683.5 89" stroke="#333" stroke-width="1.3" stroke-dasharray="1.6 1.2"/><path d="M711 102 L715.5 89 L719 89 L723.5 102 L720.5 102 L719.5 99 L715 99 L714 102 Z M715.8 96.5 L718.8 96.5 L717.3 92 Z" fill="#000" fill-rule="evenodd"/><path d="M710 102 L722 102" stroke="#3aa03a" stroke-width="1.2"/><path d="M709.8 99.7 L712.0999999999999 102 L709.8 104.3 L707.5 102 Z" fill="#b0b0ff" stroke="#2a8a3a" stroke-width="1.3"/><defs><linearGradient id="gPage" x1="0" y1="0" x2="1" y2="1"><stop offset="0" stop-color="#fff"/><stop offset="1" stop-color="#a8a8a8"/></linearGradient></defs><rect x="760.5" y="89.5" width="12" height="14.5" rx="1.5" fill="url(#gPage)" stroke="#333" stroke-width="1.3"/><path d="M795.0 89 L795.0 104.5 M795 89.0 L810.5 89.0" stroke="#0000ff" stroke-width="1.2"/><path d="M798.8 89 L798.8 104.5 M795 92.8 L810.5 92.8" stroke="#0000ff" stroke-width="1.2"/><path d="M802.6 89 L802.6 104.5 M795 96.6 L810.5 96.6" stroke="#0000ff" stroke-width="1.2"/><path d="M806.4 89 L806.4 104.5 M795 100.4 L810.5 100.4" stroke="#0000ff" stroke-width="1.2"/><path d="M810.2 89 L810.2 104.5 M795 104.2 L810.5 104.2" stroke="#0000ff" stroke-width="1.2"/><path d="M833.5 89 L833.5 104 M846.5 89 L846.5 104 M838 104 L844 89" stroke="#0000ff" stroke-width="1.2"/></svg><svg style="position:absolute;left:0px;top:0px;" width="1920" height="1026" viewBox="0 0 1920 1026"><defs>
<linearGradient id="gDoc" x1="0" y1="0" x2="1" y2="1"><stop offset="0" stop-color="#fff"/><stop offset="1" stop-color="#d8d8d8"/></linearGradient>
<linearGradient id="gSel" x1="0" y1="0" x2="1" y2="1"><stop offset="0" stop-color="#f0f4f8"/><stop offset="1" stop-color="#a8c0d8"/></linearGradient>
</defs><path d="M111.5 131.8 L119.0 131.8 L123.0 135.8 L123.0 146.60000000000002 L111.5 146.60000000000002 Z" fill="url(#gDoc)" stroke="#bbb" stroke-width="0.9" stroke-linejoin="round"/><path d="M119.0 131.8 L119.0 135.8 L123.0 135.8" fill="none" stroke="#bbb" stroke-width="0.63"/><circle cx="122.3" cy="139.6" r="3.6" fill="#fff" stroke="#2f64b0" stroke-width="1.4"/><path d="M120 139.6 L124.6 139.6 M122.3 137.3 L122.3 141.9" stroke="#2f64b0" stroke-width="1.4"/><path d="M147 133 L152 133 L153.5 134.5 L163 134.5 L163 147 L147 147 Z" fill="#c8b088" stroke="#b09870" stroke-width="0.8"/><rect x="151" y="136" width="10" height="5.5" fill="#f4f0ea" stroke="#8a7a60" stroke-width="0.7"/><path d="M146.5 140 L163.5 140 L163 147 L147 147 Z" fill="#d8c4a0" stroke="#b09870" stroke-width="0.8"/><path d="M190.5 131.5 L193.5 131.5 L193.5 137 L196.5 137 L192 142 L187.5 137 L190.5 137 Z" fill="#fff" stroke="#777" stroke-width="1"/><path d="M186 141 L188 141 L188 143 L196 143 L196 141 L198.5 141 L198.5 147 L186 147 Z" fill="#3a7ad0" stroke="#2a5aa0" stroke-width="0.8"/><rect x="221" y="131.5" width="16" height="10" rx="2" fill="#555" stroke="#222" stroke-width="1"/><rect x="223.5" y="133" width="11" height="2.5" fill="#ddd"/><rect x="223.5" y="140" width="11" height="7" fill="#e8f4e8" stroke="#222" stroke-width="1.1"/><path d="M276.5 131.5 L284.0 131.5 L288.0 135.5 L288.0 147.0 L276.5 147.0 Z" fill="url(#gDoc)" stroke="#111" stroke-width="1.3" stroke-linejoin="round"/><path d="M284.0 131.5 L284.0 135.5 L288.0 135.5" fill="none" stroke="#111" stroke-width="0.9099999999999999"/><path d="M271.5 139.5 L281 139.5" stroke="#000" stroke-width="1.3"/><path d="M284 139.5 L280 136.5 L280 142.5 Z" fill="#000"/><path d="M309.5 131.5 L317.0 131.5 L321.0 135.5 L321.0 147.0 L309.5 147.0 Z" fill="url(#gDoc)" stroke="#111" stroke-width="1.3" stroke-linejoin="round"/><path d="M317.0 131.5 L317.0 135.5 L321.0 135.5" fill="none" stroke="#111" stroke-width="0.9099999999999999"/><path d="M315 139.5 L323.5 139.5" stroke="#000" stroke-width="1.3"/><path d="M326.5 139.5 L322.5 136.5 L322.5 142.5 Z" fill="#000"/><path d="M361.5 136 L366 132 L366 134.5 L370 134.5 Q375.5 135 375.5 140 Q375.5 144.5 369.5 144.5 L367 144.5 L367 142 L369.5 142 Q373 142 373 140 Q373 137.5 370 137.5 L366 137.5 L366 140 Z" fill="#e8c020" stroke="#a88000" stroke-width="0.8" stroke-linejoin="round"/><path d="M412.5 136 L408 132 L408 134.5 L404 134.5 Q398.5 135 398.5 140 Q398.5 144.5 404.5 144.5 L407 144.5 L407 142 L404.5 142 Q401 142 401 140 Q401 137.5 404 137.5 L408 137.5 L408 140 Z" fill="#e4f0dc" stroke="#c8dcc0" stroke-width="0.8" stroke-linejoin="round"/><rect x="448.5" y="131.5" width="9.5" height="10" fill="#f4f4f4" stroke="#666" stroke-width="1"/><path d="M450 134.5 L456 134.5 M450 136.5 L456 136.5 M450 138.5 L454 138.5" stroke="#777" stroke-width="0.8"/><rect x="453.5" y="136.5" width="9.5" height="10" fill="#f4f4f4" stroke="#666" stroke-width="1"/><path d="M455 140.5 L461 140.5 M455 142.5 L459 142.5" stroke="#777" stroke-width="0.8"/><path d="M487 131.5 L494.5 141 M501 131.5 L493.5 141" stroke="#888" stroke-width="1.6"/><circle cx="489" cy="143.5" r="3" fill="#d42020" stroke="#a01010" stroke-width="0.6"/><circle cx="497.5" cy="143.5" r="3" fill="#d42020" stroke="#a01010" stroke-width="0.6"/><circle cx="489" cy="143.5" r="1" fill="#fff"/><circle cx="497.5" cy="143.5" r="1" fill="#fff"/><rect x="522.5" y="132.5" width="14" height="14" rx="1" fill="#d8a050" stroke="#a07030" stroke-width="0.9"/><rect x="526" y="131" width="5" height="3" fill="#ddd" stroke="#666" stroke-width="0.8"/><rect x="527" y="136" width="10.5" height="10.5" fill="#fafafa" stroke="#666" stroke-width="0.9"/><path d="M529 139 L535.5 139 M529 141 L535.5 141 M529 143 L533.5 143" stroke="#777" stroke-width="0.8"/><path d="M584.0 142.5 L586.5 145" stroke="#000" stroke-width="2.4" stroke-linecap="round"/><circle cx="579.5" cy="138" r="6.6" fill="#e4eaf0" stroke="#111" stroke-width="1.2"/><rect x="575.5" y="134.8" width="8" height="6.5" fill="#fff" stroke="#111" stroke-width="0.9" stroke-dasharray="1.2 0.9"/><path d="M621.0 142.5 L623.5 145" stroke="#000" stroke-width="2.4" stroke-linecap="round"/><circle cx="616.5" cy="138" r="6.6" fill="#e4eaf0" stroke="#111" stroke-width="1.2"/><rect x="612.5" y="134" width="5" height="5" fill="#f0c040" stroke="#222" stroke-width="0.8"/><rect x="615.5" y="137" width="5" height="5" fill="#f0c040" stroke="#222" stroke-width="0.8"/><path d="M658.0 142.5 L660.5 145" stroke="#000" stroke-width="2.4" stroke-linecap="round"/><circle cx="653.5" cy="138" r="6.6" fill="#e4eaf0" stroke="#111" stroke-width="1.2"/><rect x="650.5" y="133.5" width="6" height="9" fill="url(#gDoc)" stroke="#111" stroke-width="0.9"/><rect x="687" y="132.5" width="10" height="13" fill="url(#gDoc)" stroke="#777" stroke-width="0.6"/><path d="M685.5 134 L685.5 131.5 L688 131.5 M696 131.5 L698.5 131.5 L698.5 134 M685.5 144 L685.5 146.5 L688 146.5 M696 146.5 L698.5 146.5 L698.5 144" stroke="#111" stroke-width="1.4" fill="none"/><rect x="735.5" y="131.5" width="9" height="9" fill="#eef2f6" stroke="#222" stroke-width="1.1"/><rect x="738.5" y="134.5" width="12" height="12" fill="url(#gSel)" stroke="#222" stroke-width="1.1"/><rect x="772.5" y="131.5" width="9" height="9" fill="#eef2f6" stroke="#222" stroke-width="1.1"/><rect x="775.5" y="134.5" width="12" height="12" fill="url(#gSel)" stroke="#222" stroke-width="1.1"/><rect x="778.5" y="140" width="6.5" height="4.5" fill="#f0c020" stroke="#222" stroke-width="0.8"/><path d="M779.8 140 L779.8 138.5 Q781.7 136 783.7 138.5 L783.7 140" stroke="#222" stroke-width="0.9" fill="none"/><rect x="809.5" y="131.5" width="9" height="9" fill="#eef2f6" stroke="#222" stroke-width="1.1"/><rect x="812.5" y="134.5" width="12" height="12" fill="url(#gSel)" stroke="#222" stroke-width="1.1"/><rect x="815.5" y="140" width="6.5" height="4.5" fill="#60b040" stroke="#222" stroke-width="0.8"/><path d="M816.8 140 L816.8 138.5 Q818.7 136 820.7 138.5" stroke="#222" stroke-width="0.9" fill="none"/><path d="M862 140 L870 140 L870 145 L862 145 Z" fill="url(#gSel)" stroke="#333" stroke-width="0.9"/><circle cx="870.5" cy="137" r="4.2" fill="#c8d8e8" stroke="#333" stroke-width="0.9"/><rect x="859.8" y="130.8" width="2.4" height="2.4" fill="#000"/><rect x="873.8" y="130.8" width="2.4" height="2.4" fill="#000"/><rect x="859.8" y="144.8" width="2.4" height="2.4" fill="#000"/><rect x="873.8" y="144.8" width="2.4" height="2.4" fill="#000"/><path d="M899 140 L907 140 L907 145 L899 145 Z" fill="#f0d050" stroke="#333" stroke-width="0.9"/><circle cx="907.5" cy="137" r="4.2" fill="#c8d8e8" stroke="#333" stroke-width="0.9"/><rect x="896.8" y="135.8" width="2.4" height="2.4" fill="#000"/><rect x="906.8" y="130.8" width="2.4" height="2.4" fill="#000"/><rect x="910.8" y="138.8" width="2.4" height="2.4" fill="#000"/><rect x="896.8" y="144.8" width="2.4" height="2.4" fill="#000"/><rect x="908.8" y="144.8" width="2.4" height="2.4" fill="#000"/><rect x="901.8" y="131.8" width="2.4" height="2.4" fill="#000"/><path d="M948.5 131.5 L963 131.5 L948.5 147 Z" fill="#fff" stroke="#000" stroke-width="1.2"/><path d="M963 131.5 Q958 140 948.5 147 L952 147 Q960 141 963 134 Z" fill="#111"/><path d="M960.5 132 L964 131 L963 136 Z" fill="#f0b020"/><path d="M985 131.5 L1001 131.5 L1001 136 L999.5 136 Q999 133.5 996 133.5 L994.5 133.5 L994.5 145 L997 146 L997 147 L989 147 L989 146 L991.5 145 L991.5 133.5 L990 133.5 Q987 133.5 986.5 136 L985 136 Z" fill="#000"/><path d="M1022.5 135 L1033.5 135 L1037 138 L1026 138 Z M1022.5 138 L1033.5 138 L1037 141 L1026 141 Z M1022.5 141 L1033.5 141 L1037 144 L1026 144 Z" fill="#fafafa" stroke="#222" stroke-width="0.9" stroke-linejoin="round"/><rect x="1059" y="131.5" width="15" height="15" fill="#fafafa" stroke="#000" stroke-width="1.2"/><rect x="1059.6" y="132.2" width="13.8" height="2" fill="#a8c4e0"/><path d="M1064 137 L1061.8 139.5 L1064 142 M1069 137 L1071.2 139.5 L1069 142" stroke="#333" stroke-width="0.9" fill="none"/><path d="M1096.5 131 L1096.5 147" stroke="#d01010" stroke-width="1.3"/><rect x="1098" y="131.5" width="5" height="3.5" fill="#b8d0e8" stroke="#222" stroke-width="0.9"/><rect x="1098" y="137" width="13" height="3.5" fill="#b8d0e8" stroke="#222" stroke-width="0.9"/><rect x="1098" y="142.5" width="10" height="3.5" fill="#b8d0e8" stroke="#222" stroke-width="0.9"/><path d="M1148.5 131.5 L1156 131.5 L1159.5 135 L1159.5 147 L1148.5 147 Z" fill="none" stroke="#ccc" stroke-width="0.9"/><circle cx="1153.5" cy="141" r="2.5" fill="none" stroke="#bbb" stroke-width="1.1"/><path d="M1155 143 L1158 146" stroke="#bbb" stroke-width="1.2"/><path d="M1186 146 L1196.5 133" stroke="#3a6aaa" stroke-width="2.6" stroke-linecap="round"/><path d="M1186.5 132.5 Q1189 131 1191 133.5 L1198 142 Q1200.5 141.5 1200 144.5 Q1199 147 1196.5 146 L1189.5 136.5 Q1186 137 1185.5 134.5" fill="none" stroke="#777" stroke-width="1.2"/></svg><div style="position:absolute;left:342px;top:122px;width:1px;height:34px;background:#dcd9d5;"></div><svg style="position:absolute;left:0px;top:0px;" width="1920" height="1026" viewBox="0 0 1920 1026"><path d="M709 180.6 L711.8 173 L714.2 173 L717 180.6 L714.6 180.6 L713.8 178.472 L712.2 178.472 L711.4 180.6 Z M712.9 176.8 L713.1 176.8 L713.0 174.52 Z" fill="#151515" fill-rule="evenodd"/><path d="M709 188.8 L711.8 181.3 L714.2 181.3 L717 188.8 L714.6 188.8 L713.8 186.70000000000002 L712.2 186.70000000000002 L711.4 188.8 Z M712.9 185.05 L713.1 185.05 L713.0 182.8 Z" fill="#2a64a8" fill-rule="evenodd"/><rect x="914.2" y="174.3" width="14.5" height="2.4" rx="1.2" fill="#3a3a3a"/><rect x="915" y="175.1" width="12.9" height="0.7" fill="#aaa"/><rect x="914.2" y="178.5" width="19.5" height="2.4" rx="1.2" fill="#3a3a3a"/><rect x="915" y="179.29999999999998" width="17.9" height="0.7" fill="#aaa"/><rect x="914.2" y="182.20000000000002" width="16.2" height="2.4" rx="1.2" fill="#3a3a3a"/><rect x="915" y="183.0" width="14.6" height="0.7" fill="#aaa"/><rect x="914.2" y="186.4" width="11.2" height="2.4" rx="1.2" fill="#3a3a3a"/><rect x="915" y="187.2" width="9.6" height="0.7" fill="#aaa"/><text x="973.5" y="185" font-family="Liberation Sans" font-weight="bold" font-style="italic" font-size="12" fill="#222">x</text><text x="981.5" y="180.5" font-family="Liberation Sans" font-weight="bold" font-style="italic" font-size="9" fill="#3a70b0">y</text><text x="1010.5" y="185" font-family="Liberation Sans" font-weight="bold" font-style="italic" font-size="12" fill="#222">x</text><text x="1018.5" y="187" font-family="Liberation Sans" font-weight="bold" font-style="italic" font-size="9" fill="#3a70b0">y</text><path d="M1040 185 L1042.55 177 L1044.95 177 L1047.5 185 L1045.1 185 L1044.3 182.76 L1043.2 182.76 L1042.4 185 Z M1043.9 181.0 L1043.6 181.0 L1043.75 178.6 Z" fill="#222" fill-rule="evenodd"/><path d="M1048 185 L1050.55 177 L1052.95 177 L1055.5 185 L1053.1 185 L1052.3 182.76 L1051.2 182.76 L1050.4 185 Z M1051.9 181.0 L1051.6 181.0 L1051.75 178.6 Z" fill="#3a70b0" fill-rule="evenodd"/><text x="1164" y="185" font-family="Liberation Sans" font-weight="bold" font-size="11" fill="#222">d</text><text x="1175" y="185" font-family="Liberation Sans" font-weight="bold" font-size="11" fill="#3a70b0">ti</text><path d="M1288 185 L1290.55 177 L1292.95 177 L1295.5 185 L1293.1 185 L1292.3 182.76 L1291.2 182.76 L1290.4 185 Z M1291.9 181.0 L1291.6 181.0 L1291.75 178.6 Z" fill="#222" fill-rule="evenodd"/><path d="M1296 185 L1298.55 177 L1300.95 177 L1303.5 185 L1301.1 185 L1300.3 182.76 L1299.2 182.76 L1298.4 185 Z M1299.9 181.0 L1299.6 181.0 L1299.75 178.6 Z" fill="#3a70b0" fill-rule="evenodd"/><path d="M1296 174 L1296 187" stroke="#999" stroke-width="1"/><path d="M1412 185 L1414.55 176 L1416.95 176 L1419.5 185 L1417.1 185 L1416.3 182.48 L1415.2 182.48 L1414.4 185 Z M1415.9 180.5 L1415.6 180.5 L1415.75 177.8 Z" fill="#222" fill-rule="evenodd"/><path d="M1421 182 L1423.55 174 L1425.95 174 L1428.5 182 L1426.1 182 L1425.3 179.76 L1424.2 179.76 L1423.4 182 Z M1424.9 178.0 L1424.6 178.0 L1424.75 175.6 Z" fill="#3a70b0" fill-rule="evenodd"/><path d="M1420 174 L1420 187" stroke="#999" stroke-width="1"/><path d="M1536 185 L1538.55 176 L1540.95 176 L1543.5 185 L1541.1 185 L1540.3 182.48 L1539.2 182.48 L1538.4 185 Z M1539.9 180.5 L1539.6 180.5 L1539.75 177.8 Z" fill="#222" fill-rule="evenodd"/><path d="M1545 187 L1552 178 L1551.5 188 Z" fill="#3a70b0"/><path d="M1544 174 L1544 187" stroke="#999" stroke-width="1"/><rect x="1667.5" y="169.5" width="21.5" height="21.5" fill="none" stroke="#111" stroke-width="1.3"/><path d="M1670.0 178.5 L1670.0 173.5 Q1672.0 171.0 1674.0 173.5 L1674.0 178.5 M1670.0 176.0 L1674.0 176.0 M1675.5 174.5 L1685.5 174.5 M1670.0 180.5 L1685.5 180.5 M1670.0 186.5 L1685.5 186.5" stroke="#111" stroke-width="1" fill="none"/><path d="M1687.0 174.5 L1684.0 172.5 L1684.0 176.5 Z M1687.0 180.5 L1684.0 178.5 L1684.0 182.5 Z M1687.0 186.5 L1684.0 184.5 L1684.0 188.5 Z" fill="#111"/><rect x="1789.5" y="169.5" width="21.5" height="21.5" fill="none" stroke="#111" stroke-width="1.3"/><path d="M1792.0 178.5 L1792.0 173.5 Q1794.0 171.0 1796.0 173.5 L1796.0 178.5 M1792.0 176.0 L1796.0 176.0 M1797.5 174.5 L1807.5 174.5 M1792.0 180.5 L1807.5 180.5 M1792.0 186.5 L1807.5 186.5" stroke="#111" stroke-width="1" fill="none"/><path d="M1809.0 174.5 L1806.0 172.5 L1806.0 176.5 Z M1809.0 180.5 L1806.0 178.5 L1806.0 182.5 Z M1809.0 186.5 L1806.0 184.5 L1806.0 188.5 Z" fill="#111"/><rect x="1728.5" y="169.5" width="21.5" height="21.5" fill="none" stroke="#999" stroke-width="1.3"/><path d="M1732 172 L1732 189 M1737 174 L1746 174 M1741.5 172 L1741.5 180 M1737 178 L1746 178 M1737 183 L1745 183 L1745 188 L1737 188" stroke="#999" stroke-width="1" fill="none"/><path d="M1732 189.5 L1730 186 L1734 186 Z" fill="#999"/></svg><svg style="position:absolute;left:0px;top:0px;" width="1920" height="1026" viewBox="0 0 1920 1026"><defs><linearGradient id="gBar" x1="0" y1="0" x2="1" y2="1"><stop offset="0" stop-color="#e8f0f8"/><stop offset="1" stop-color="#a8c2dc"/></linearGradient></defs><path d="M1566 211 L1566 228" stroke="#e00000" stroke-width="1.3"/><rect x="1567.60" y="212.60" width="4.80" height="3.80" fill="url(#gBar)" stroke="#111" stroke-width="1.2"/><rect x="1567.60" y="218.60" width="12.80" height="3.80" fill="url(#gBar)" stroke="#111" stroke-width="1.2"/><rect x="1567.60" y="223.60" width="9.80" height="3.80" fill="url(#gBar)" stroke="#111" stroke-width="1.2"/><rect x="1589.8" y="271.3" width="19.5" height="19.5" fill="none" stroke="#111" stroke-width="2.2" stroke-dasharray="2.2 1.8"/><rect x="1594" y="276" width="11" height="9.5" fill="url(#gBar)" stroke="#111" stroke-width="1.3"/><rect x="1757.80" y="308.90" width="16.10" height="6.00" fill="url(#gBar)" stroke="#111" stroke-width="1.2"/><rect x="1768.10" y="313.30" width="5.80" height="4.40" fill="url(#gBar)" stroke="#111" stroke-width="1.2"/><rect x="1762.80" y="321.10" width="11.10" height="3.80" fill="url(#gBar)" stroke="#111" stroke-width="1.2"/><path d="M1774.50 303.00 L1774.50 327.00" stroke="#e00000" stroke-width="1.3"/><rect x="1775.10" y="303.60" width="4.80" height="4.30" fill="#f4d030" stroke="#111" stroke-width="1.2"/><rect x="1802.20" y="304.85" width="20.95" height="5.95" fill="url(#gBar)" stroke="#111" stroke-width="1.2"/><rect x="1802.20" y="308.00" width="5.60" height="4.70" fill="url(#gBar)" stroke="#111" stroke-width="1.2"/><rect x="1802.20" y="316.10" width="10.95" height="3.80" fill="url(#gBar)" stroke="#111" stroke-width="1.2"/><path d="M1801.60 303.00 L1801.60 327.00" stroke="#e00000" stroke-width="1.3"/><path d="M1815.60 324.60 L1804.80 324.60" stroke="#000" stroke-width="1.2"/><path d="M1802.80 324.60 L1806.30 322.40 L1806.30 326.80 Z" fill="#000"/><rect x="1845.80" y="304.85" width="21.30" height="5.95" fill="url(#gBar)" stroke="#111" stroke-width="1.2"/><rect x="1853.00" y="308.90" width="6.90" height="3.80" fill="url(#gBar)" stroke="#111" stroke-width="1.2"/><rect x="1850.80" y="316.10" width="11.00" height="3.80" fill="url(#gBar)" stroke="#111" stroke-width="1.2"/><path d="M1856.40 303.00 L1856.40 327.00" stroke="#e00000" stroke-width="1.3"/><path d="M1847.00 324.60 L1853.50 324.60" stroke="#000" stroke-width="1.2"/><path d="M1855.50 324.60 L1852.00 322.40 L1852.00 326.80 Z" fill="#000"/><path d="M1865.80 324.60 L1859.30 324.60" stroke="#000" stroke-width="1.2"/><path d="M1857.30 324.60 L1860.80 322.40 L1860.80 326.80 Z" fill="#000"/><rect x="1890.80" y="304.85" width="21.10" height="5.95" fill="url(#gBar)" stroke="#111" stroke-width="1.2"/><rect x="1906.10" y="308.00" width="5.80" height="4.70" fill="url(#gBar)" stroke="#111" stroke-width="1.2"/><rect x="1901.10" y="316.10" width="10.80" height="3.80" fill="url(#gBar)" stroke="#111" stroke-width="1.2"/><path d="M1912.50 303.00 L1912.50 327.00" stroke="#e00000" stroke-width="1.3"/><path d="M1898.40 324.60 L1909.50 324.60" stroke="#000" stroke-width="1.2"/><path d="M1911.50 324.60 L1908.00 322.40 L1908.00 326.80 Z" fill="#000"/><rect x="1759.00" y="343.00" width="3.80" height="11.00" fill="url(#gBar)" stroke="#111" stroke-width="1.2"/><rect x="1765.90" y="348.00" width="5.10" height="6.00" fill="url(#gBar)" stroke="#111" stroke-width="1.2"/><rect x="1769.35" y="338.00" width="5.65" height="16.00" fill="url(#gBar)" stroke="#111" stroke-width="1.2"/><path d="M1757.00 354.60 L1780.60 354.60" stroke="#e00000" stroke-width="1.3"/><rect x="1775.10" y="355.20" width="4.90" height="4.80" fill="#f4d030" stroke="#111" stroke-width="1.2"/><rect x="1808.10" y="338.00" width="3.80" height="11.00" fill="url(#gBar)" stroke="#111" stroke-width="1.2"/><rect x="1817.20" y="338.00" width="5.95" height="21.00" fill="url(#gBar)" stroke="#111" stroke-width="1.2"/><rect x="1815.30" y="338.00" width="5.10" height="6.00" fill="url(#gBar)" stroke="#111" stroke-width="1.2"/><path d="M1801.00 337.40 L1825.00 337.40" stroke="#e00000" stroke-width="1.3"/><path d="M1803.40 352.00 L1803.40 341.00" stroke="#000" stroke-width="1.2"/><path d="M1803.40 339.00 L1801.20 342.50 L1805.60 342.50 Z" fill="#000"/><rect x="1852.00" y="343.00" width="4.15" height="11.00" fill="url(#gBar)" stroke="#111" stroke-width="1.2"/><rect x="1861.10" y="338.00" width="6.00" height="21.30" fill="url(#gBar)" stroke="#111" stroke-width="1.2"/><rect x="1859.20" y="345.20" width="3.80" height="6.60" fill="url(#gBar)" stroke="#111" stroke-width="1.2"/><path d="M1845.20 348.30 L1868.00 348.30" stroke="#e00000" stroke-width="1.3"/><path d="M1847.40 338.50 L1847.40 345.00" stroke="#000" stroke-width="1.2"/><path d="M1847.40 347.00 L1845.20 343.50 L1849.60 343.50 Z" fill="#000"/><path d="M1847.40 358.50 L1847.40 351.60" stroke="#000" stroke-width="1.2"/><path d="M1847.40 349.60 L1845.20 353.10 L1849.60 353.10 Z" fill="#000"/><rect x="1897.00" y="348.00" width="4.15" height="11.00" fill="url(#gBar)" stroke="#111" stroke-width="1.2"/><rect x="1906.10" y="338.00" width="6.00" height="21.00" fill="url(#gBar)" stroke="#111" stroke-width="1.2"/><rect x="1904.20" y="353.00" width="4.80" height="6.00" fill="url(#gBar)" stroke="#111" stroke-width="1.2"/><path d="M1889.25 359.60 L1912.50 359.60" stroke="#e00000" stroke-width="1.3"/><path d="M1891.40 345.00 L1891.40 356.00" stroke="#000" stroke-width="1.2"/><path d="M1891.40 358.00 L1889.20 354.50 L1893.60 354.50 Z" fill="#000"/><rect x="1802.00" y="407.00" width="5.10" height="8.90" fill="url(#gBar)" stroke="#111" stroke-width="1.2"/><rect x="1811.00" y="405.80" width="5.00" height="15.20" fill="url(#gBar)" stroke="#111" stroke-width="1.2"/><rect x="1820.00" y="408.90" width="3.00" height="10.90" fill="url(#gBar)" stroke="#111" stroke-width="1.2"/><path d="M1801.40 399.00 L1801.40 411.00" stroke="#e00000" stroke-width="1.3"/><path d="M1810.40 399.00 L1810.40 411.00" stroke="#e00000" stroke-width="1.3"/><path d="M1819.40 399.00 L1819.40 411.00" stroke="#e00000" stroke-width="1.3"/><path d="M1802.20 400.20 L1809.60 400.20" stroke="#000" stroke-width="1"/><path d="M1811.20 400.20 L1818.60 400.20" stroke="#000" stroke-width="1"/><rect x="1845.90" y="407.00" width="5.05" height="8.90" fill="url(#gBar)" stroke="#111" stroke-width="1.2"/><rect x="1854.80" y="405.80" width="5.30" height="15.20" fill="url(#gBar)" stroke="#111" stroke-width="1.2"/><rect x="1864.90" y="408.90" width="3.20" height="10.90" fill="url(#gBar)" stroke="#111" stroke-width="1.2"/><path d="M1848.40 399.00 L1848.40 411.00" stroke="#e00000" stroke-width="1.3"/><path d="M1857.55 399.00 L1857.55 411.00" stroke="#e00000" stroke-width="1.3"/><path d="M1866.50 399.00 L1866.50 411.00" stroke="#e00000" stroke-width="1.3"/><path d="M1849.20 400.20 L1856.75 400.20" stroke="#000" stroke-width="1"/><path d="M1858.35 400.20 L1865.70 400.20" stroke="#000" stroke-width="1"/><rect x="1890.90" y="408.90" width="3.90" height="10.90" fill="url(#gBar)" stroke="#111" stroke-width="1.2"/><rect x="1897.90" y="405.80" width="5.00" height="15.20" fill="url(#gBar)" stroke="#111" stroke-width="1.2"/><rect x="1906.90" y="407.00" width="5.00" height="8.90" fill="url(#gBar)" stroke="#111" stroke-width="1.2"/><path d="M1894.40 399.00 L1894.40 411.00" stroke="#e00000" stroke-width="1.3"/><path d="M1903.50 399.00 L1903.50 411.00" stroke="#e00000" stroke-width="1.3"/><path d="M1912.50 399.00 L1912.50 411.00" stroke="#e00000" stroke-width="1.3"/><path d="M1895.20 400.20 L1902.70 400.20" stroke="#000" stroke-width="1"/><path d="M1904.30 400.20 L1911.70 400.20" stroke="#000" stroke-width="1"/><rect x="1809.00" y="433.90" width="9.00" height="4.80" fill="url(#gBar)" stroke="#111" stroke-width="1.2"/><rect x="1808.00" y="443.00" width="15.00" height="4.70" fill="url(#gBar)" stroke="#111" stroke-width="1.2"/><rect x="1811.00" y="450.20" width="11.10" height="4.80" fill="url(#gBar)" stroke="#111" stroke-width="1.2"/><path d="M1801.40 433.30 L1812.70 433.30" stroke="#e00000" stroke-width="1.3"/><path d="M1801.40 442.40 L1812.70 442.40" stroke="#e00000" stroke-width="1.3"/><path d="M1801.40 450.60 L1812.70 450.60" stroke="#e00000" stroke-width="1.3"/><path d="M1802.80 434.10 L1802.80 441.60" stroke="#000" stroke-width="1"/><path d="M1802.80 443.20 L1802.80 449.80" stroke="#000" stroke-width="1"/><rect x="1853.10" y="433.90" width="8.90" height="4.80" fill="url(#gBar)" stroke="#111" stroke-width="1.2"/><rect x="1851.90" y="443.00" width="15.20" height="4.70" fill="url(#gBar)" stroke="#111" stroke-width="1.2"/><rect x="1854.80" y="452.80" width="11.10" height="3.20" fill="url(#gBar)" stroke="#111" stroke-width="1.2"/><path d="M1845.40 436.40 L1856.70 436.40" stroke="#e00000" stroke-width="1.3"/><path d="M1845.40 445.50 L1856.70 445.50" stroke="#e00000" stroke-width="1.3"/><path d="M1845.40 454.40 L1856.70 454.40" stroke="#e00000" stroke-width="1.3"/><path d="M1846.80 437.20 L1846.80 444.70" stroke="#000" stroke-width="1"/><path d="M1846.80 446.30 L1846.80 453.60" stroke="#000" stroke-width="1"/><rect x="1899.10" y="434.90" width="11.30" height="3.80" fill="url(#gBar)" stroke="#111" stroke-width="1.2"/><rect x="1896.30" y="442.00" width="14.80" height="4.90" fill="url(#gBar)" stroke="#111" stroke-width="1.2"/><rect x="1897.10" y="451.00" width="9.00" height="4.80" fill="url(#gBar)" stroke="#111" stroke-width="1.2"/><path d="M1889.40 438.30 L1900.70 438.30" stroke="#e00000" stroke-width="1.3"/><path d="M1889.40 447.50 L1900.70 447.50" stroke="#e00000" stroke-width="1.3"/><path d="M1889.40 456.40 L1900.70 456.40" stroke="#e00000" stroke-width="1.3"/><path d="M1890.80 439.10 L1890.80 446.70" stroke="#000" stroke-width="1"/><path d="M1890.80 448.30 L1890.80 455.60" stroke="#000" stroke-width="1"/><path d="M1759 497.5 L1756.5 503 L1758.5 513 L1766.5 512.5 L1770 506.5 L1768 500 Z M1770 506.5 L1776 505 L1779 497 M1776 505 L1778.5 513" fill="none" stroke="#3333ee" stroke-width="1"/><circle cx="1759" cy="497.5" r="1.6" fill="#aaaaff" stroke="#2222ee" stroke-width="0.9"/><circle cx="1768" cy="500" r="1.6" fill="#aaaaff" stroke="#2222ee" stroke-width="0.9"/><circle cx="1770" cy="506.5" r="1.6" fill="#aaaaff" stroke="#2222ee" stroke-width="0.9"/><circle cx="1766.5" cy="512.5" r="1.6" fill="#aaaaff" stroke="#2222ee" stroke-width="0.9"/><circle cx="1758.5" cy="513" r="1.6" fill="#aaaaff" stroke="#2222ee" stroke-width="0.9"/><circle cx="1756.5" cy="503" r="1.6" fill="#aaaaff" stroke="#2222ee" stroke-width="0.9"/><circle cx="1776" cy="505" r="1.6" fill="#aaaaff" stroke="#2222ee" stroke-width="0.9"/><circle cx="1779" cy="497" r="1.6" fill="#aaaaff" stroke="#2222ee" stroke-width="0.9"/><circle cx="1778.5" cy="513" r="1.6" fill="#aaaaff" stroke="#2222ee" stroke-width="0.9"/><rect x="1802.50" y="497.20" width="9.90" height="8.20" fill="url(#gBar)" stroke="#111" stroke-width="1.2"/><rect x="1813.60" y="506.60" width="10.60" height="9.80" fill="url(#gBar)" stroke="#111" stroke-width="1.2"/><path d="M1806 506 L1806 511 L1812 511" stroke="#000" stroke-width="1.1" fill="none"/><path d="M1810 499.5 L1818 499.5 L1818 505" stroke="#000" stroke-width="1.1" fill="none"/><path d="M1806 504 L1804 507 L1808 507 Z M1818 506 L1816 503 L1820 503 Z" fill="#000"/><rect x="1846.60" y="497.20" width="7.20" height="7.20" fill="url(#gBar)" stroke="#111" stroke-width="1.2"/><rect x="1859.60" y="503.60" width="7.30" height="7.40" fill="url(#gBar)" stroke="#111" stroke-width="1.2"/><path d="M1850 505 L1850 509 M1854 500 L1862 500 L1862 503" stroke="#000" stroke-width="1.1" fill="none"/><rect x="1849" y="511.5" width="5" height="5" fill="none" stroke="#c01010" stroke-width="1.3"/><path d="M1846 513 L1857 513 M1846 516.5 L1857 516.5" stroke="#c01010" stroke-width="1.1"/><path d="M1846 518 L1857 518" stroke="#111" stroke-width="1.1"/><rect x="1890.60" y="497.20" width="7.30" height="7.20" fill="url(#gBar)" stroke="#111" stroke-width="1.2"/><rect x="1903.60" y="503.60" width="7.40" height="7.40" fill="url(#gBar)" stroke="#111" stroke-width="1.2"/><path d="M1898 500 L1906 500 L1906 503" stroke="#000" stroke-width="1.1" fill="none"/><circle cx="1895.6" cy="512.5" r="4.3" fill="none" stroke="#d01010" stroke-width="1.3" stroke-dasharray="1.6 1.1"/><path d="M1565.5 600.5 L1580.5 600.5 L1565.5 615.5 Z" fill="#fff" stroke="#000" stroke-width="1.2"/><path d="M1580.5 600.5 Q1575 609 1565.5 615.5 L1569 615.5 Q1577 610 1580.5 603 Z" fill="#111"/><path d="M1578.5 601 L1581.5 600 L1580.5 605 Z" fill="#f0b020"/><defs><linearGradient id="gTab" x1="0" y1="0" x2="1" y2="1"><stop offset="0" stop-color="#98b4d8"/><stop offset="1" stop-color="#fff"/></linearGradient><linearGradient id="gTab2" x1="0" y1="0" x2="1" y2="1"><stop offset="0" stop-color="#444"/><stop offset="1" stop-color="#ddd"/></linearGradient></defs><rect x="1590" y="640" width="16" height="15.5" fill="url(#gTab)"/><rect x="1690.5" y="640.5" width="15" height="14.5" fill="none" stroke="url(#gTab2)" stroke-width="1.5"/><path d="M1852 644 L1866 644 M1852 655 L1866 655" stroke="#111" stroke-width="1.3"/><path d="M1852 649.5 L1866 649.5" stroke="#111" stroke-width="1.2" stroke-dasharray="2 1.3"/><path d="M1867 644 L1863.5 641.5 L1863.5 646.5 Z" fill="#111"/><path d="M1592.8 688.3 L1599.4 695.3 M1599.4 688.3 L1592.8 695.3" stroke="#000" stroke-width="2.2"/><defs><linearGradient id="gLin" x1="0" y1="0" x2="1" y2="1"><stop offset="0" stop-color="#8fb0d8"/><stop offset="1" stop-color="#fff"/></linearGradient><radialGradient id="gRad"><stop offset="0" stop-color="#fff"/><stop offset="1" stop-color="#8fb0d8"/></radialGradient></defs><rect x="1624.5" y="684.5" width="15" height="15" fill="#8fb0d8" stroke="#222" stroke-width="1.1"/><rect x="1660.5" y="684.5" width="15" height="15" fill="url(#gLin)" stroke="#222" stroke-width="1.1"/><rect x="1696.5" y="684.5" width="15" height="15" fill="url(#gRad)" stroke="#222" stroke-width="1.1"/><rect x="1732.5" y="684.5" width="15" height="15" fill="#fff" stroke="#222" stroke-width="1.1"/><rect x="1733" y="685" width="7" height="7" fill="#8fb0d8"/><rect x="1740" y="692" width="7" height="7" fill="#8fb0d8"/><rect x="1768.5" y="684.5" width="15" height="15" fill="#fff" stroke="#222" stroke-width="1.1"/><path d="M1776 685 L1779.5 688.5 L1776 692 L1772.5 688.5 Z M1776 692 L1779.5 695.5 L1776 699 L1772.5 695.5 Z M1769 692 L1772.5 688.5 L1772.5 695.5 Z M1783 692 L1779.5 688.5 L1779.5 695.5 Z" fill="#8fb0d8"/><rect x="1804.5" y="684.5" width="15" height="15" fill="#fff" stroke="#445" stroke-width="1.1"/><path d="M1806 698 L1818 698 L1818 686" stroke="#333" stroke-width="1" fill="none"/><text x="1842" y="698" font-family="Liberation Sans" font-weight="bold" font-size="16" fill="#000">?</text><path d="M1607 779 L1611 779 L1607 783 Z M1607 812.5 L1611 812.5 L1607 808.5 Z" fill="#fff" stroke="#000" stroke-width="0.6"/><path d="M1607 815 L1611 815 L1607 819 Z M1607 848.5 L1611 848.5 L1607 844.5 Z" fill="#fff" stroke="#000" stroke-width="0.6"/><path d="M1607 851 L1611 851 L1607 855 Z M1607 884.5 L1611 884.5 L1607 880.5 Z" fill="#fff" stroke="#000" stroke-width="0.6"/><path d="M1917 887 L1913 887 L1917 891 Z M1917 920.5 L1913 920.5 L1917 916.5 Z" fill="#fff" stroke="#000" stroke-width="0.6"/></svg>
</body></html>
